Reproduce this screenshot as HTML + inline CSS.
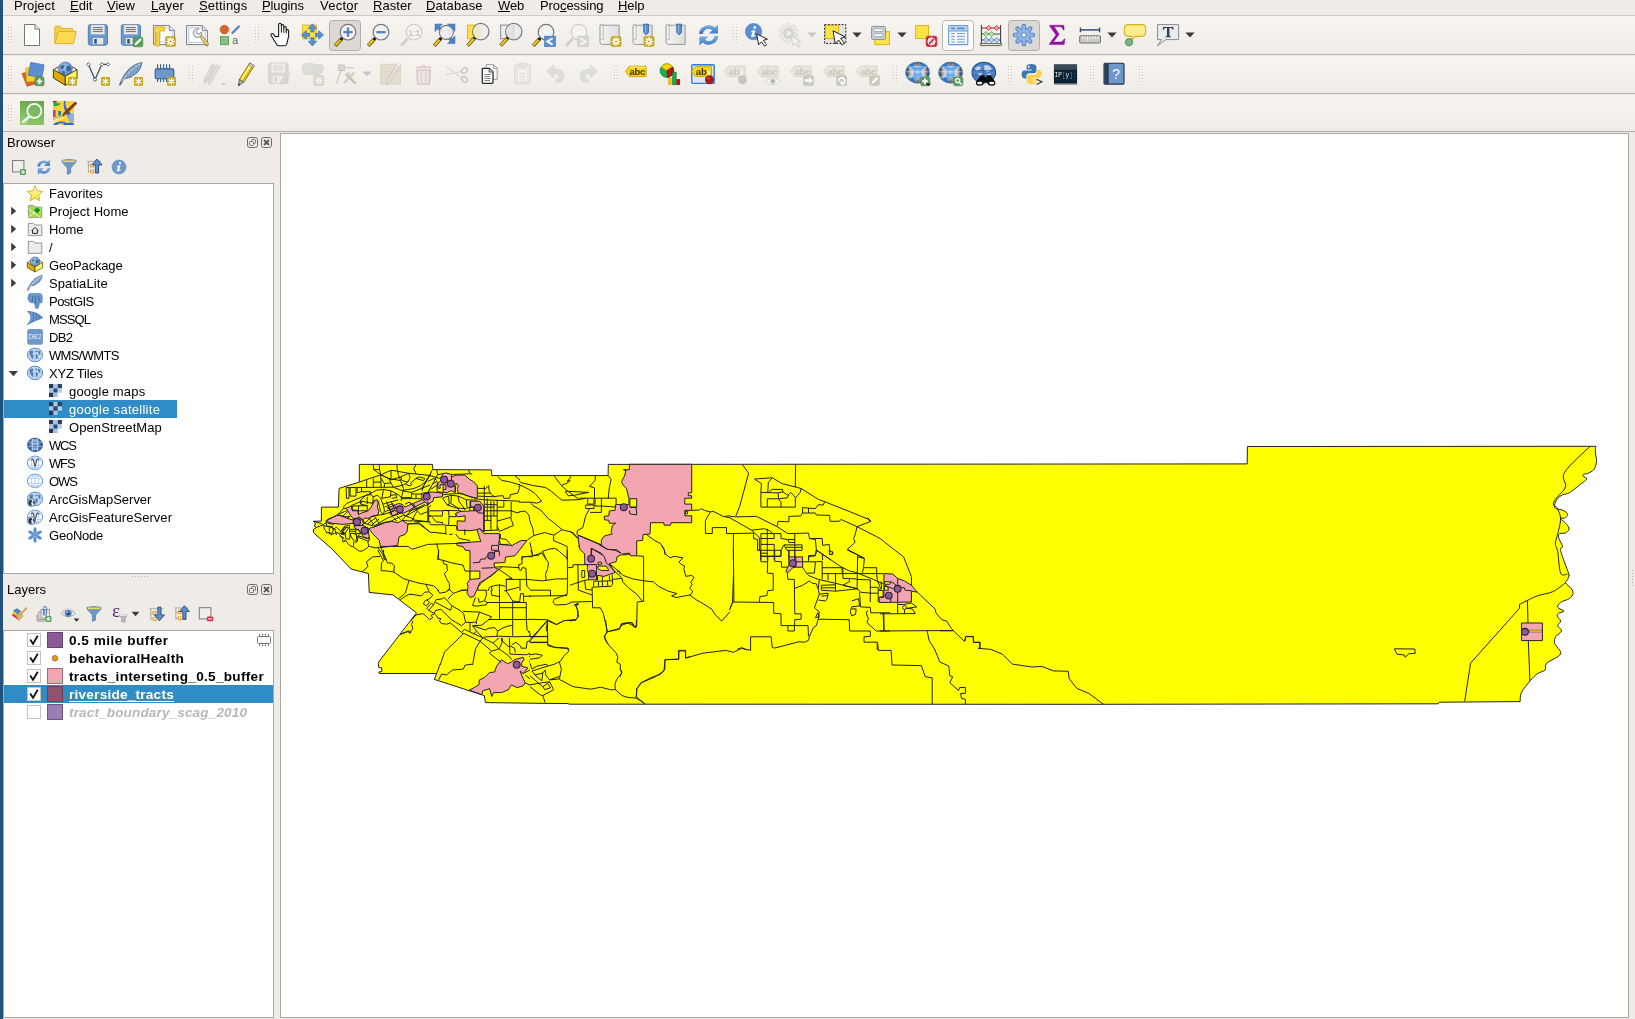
<!DOCTYPE html>
<html><head><meta charset="utf-8"><title>QGIS</title>
<style>
html,body{margin:0;padding:0}
body{width:1635px;height:1019px;position:relative;overflow:hidden;background:#efebe7;font-family:"Liberation Sans",sans-serif;font-size:13px}
.t{position:absolute;white-space:nowrap;will-change:transform}
.i{position:absolute;overflow:visible;will-change:transform}
u{text-decoration:underline;text-underline-offset:1px;text-decoration-skip-ink:none}
</style></head><body>
<div style="position:absolute;left:0px;top:0px;width:3px;height:1019px;background:#22517a"></div>
<div style="position:absolute;left:3px;top:0px;width:1632px;height:15px;background:#efebe7"></div>
<span class="t" style="left:13.70px;top:-2.50px;font-size:13px;line-height:16.00px;color:#000;letter-spacing:0.048px;">Pro<u>j</u>ect</span>
<span class="t" style="left:69.50px;top:-2.50px;font-size:13px;line-height:16.00px;color:#000;letter-spacing:-0.000px;"><u>E</u>dit</span>
<span class="t" style="left:107.30px;top:-2.50px;font-size:13px;line-height:16.00px;color:#000;letter-spacing:-0.011px;"><u>V</u>iew</span>
<span class="t" style="left:150.50px;top:-2.50px;font-size:13px;line-height:16.00px;color:#000;letter-spacing:0.076px;"><u>L</u>ayer</span>
<span class="t" style="left:198.60px;top:-2.50px;font-size:13px;line-height:16.00px;color:#000;letter-spacing:0.178px;"><u>S</u>ettings</span>
<span class="t" style="left:262.40px;top:-2.50px;font-size:13px;line-height:16.00px;color:#000;letter-spacing:-0.120px;"><u>P</u>lugins</span>
<span class="t" style="left:319.80px;top:-2.50px;font-size:13px;line-height:16.00px;color:#000;letter-spacing:0.257px;">Vect<u>o</u>r</span>
<span class="t" style="left:373.40px;top:-2.50px;font-size:13px;line-height:16.00px;color:#000;letter-spacing:0.035px;"><u>R</u>aster</span>
<span class="t" style="left:426.40px;top:-2.50px;font-size:13px;line-height:16.00px;color:#000;letter-spacing:0.119px;"><u>D</u>atabase</span>
<span class="t" style="left:498.20px;top:-2.50px;font-size:13px;line-height:16.00px;color:#000;letter-spacing:-0.165px;"><u>W</u>eb</span>
<span class="t" style="left:539.80px;top:-2.50px;font-size:13px;line-height:16.00px;color:#000;letter-spacing:-0.091px;">Pro<u>c</u>essing</span>
<span class="t" style="left:618.40px;top:-2.50px;font-size:13px;line-height:16.00px;color:#000;letter-spacing:-0.084px;"><u>H</u>elp</span>
<div style="position:absolute;left:3px;top:15px;width:1632px;height:1px;background:#cfcbc5"></div>
<div style="position:absolute;left:3px;top:16px;width:1632px;height:39px;background:linear-gradient(#f8f5f1,#efebe7)"></div>
<div style="position:absolute;left:3px;top:56px;width:1632px;height:38px;background:linear-gradient(#f8f5f1,#efebe7)"></div>
<div style="position:absolute;left:3px;top:95px;width:1632px;height:37px;background:linear-gradient(#f8f5f1,#efebe7)"></div>
<div style="position:absolute;left:3px;top:54px;width:1632px;height:1px;background:#b8b3ad"></div>
<div style="position:absolute;left:3px;top:93px;width:1632px;height:1px;background:#b8b3ad"></div>
<div style="position:absolute;left:3px;top:131px;width:1632px;height:1px;background:#b3aea8"></div>
<svg class="i" style="left:8px;top:27px" width="5" height="17"><rect x="0" y="0" width="1" height="1" fill="#c6c2bc"/><rect x="1" y="1" width="1" height="1" fill="#fbfaf9"/><rect x="3" y="0" width="1" height="1" fill="#c6c2bc"/><rect x="4" y="1" width="1" height="1" fill="#fbfaf9"/><rect x="0" y="3" width="1" height="1" fill="#c6c2bc"/><rect x="1" y="4" width="1" height="1" fill="#fbfaf9"/><rect x="3" y="3" width="1" height="1" fill="#c6c2bc"/><rect x="4" y="4" width="1" height="1" fill="#fbfaf9"/><rect x="0" y="6" width="1" height="1" fill="#c6c2bc"/><rect x="1" y="7" width="1" height="1" fill="#fbfaf9"/><rect x="3" y="6" width="1" height="1" fill="#c6c2bc"/><rect x="4" y="7" width="1" height="1" fill="#fbfaf9"/><rect x="0" y="9" width="1" height="1" fill="#c6c2bc"/><rect x="1" y="10" width="1" height="1" fill="#fbfaf9"/><rect x="3" y="9" width="1" height="1" fill="#c6c2bc"/><rect x="4" y="10" width="1" height="1" fill="#fbfaf9"/><rect x="0" y="12" width="1" height="1" fill="#c6c2bc"/><rect x="1" y="13" width="1" height="1" fill="#fbfaf9"/><rect x="3" y="12" width="1" height="1" fill="#c6c2bc"/><rect x="4" y="13" width="1" height="1" fill="#fbfaf9"/><rect x="0" y="15" width="1" height="1" fill="#c6c2bc"/><rect x="1" y="16" width="1" height="1" fill="#fbfaf9"/><rect x="3" y="15" width="1" height="1" fill="#c6c2bc"/><rect x="4" y="16" width="1" height="1" fill="#fbfaf9"/></svg>
<svg class="i" style="left:20px;top:23px;" width="24" height="24" viewBox="0 0 24 24"><path d="M4.5 1.5 H15 L19.5 6 V22.5 H4.5 Z" fill="#fff" stroke="#777" stroke-width="1" stroke-linejoin="round"/><path d="M15 1.5 V6 H19.5" fill="#f1f1f1" stroke="#777" stroke-width="1" stroke-linejoin="round"/></svg>
<svg class="i" style="left:53px;top:23px;" width="24" height="24" viewBox="0 0 24 24"><path d="M1.8 20.5 V4.2 Q1.8 3.3 2.7 3.3 H7.6 L9 5.6 H19 Q19.9 5.6 19.9 6.5 V9" fill="#f6cf45" stroke="#d8b234" stroke-width="1" stroke-linejoin="round"/><path d="M1.9 20.6 L4.8 9.2 Q5 8.5 5.8 8.5 H23.2 L20.6 20 Q20.4 20.7 19.6 20.7 Z" fill="#fdd950" stroke="#d8b234" stroke-width="1" stroke-linejoin="round"/></svg>
<svg class="i" style="left:86px;top:23px;" width="24" height="24" viewBox="0 0 24 24"><rect x="2.3" y="1.6" width="19.2" height="20.6" rx="2.2" fill="#6c98cb" stroke="#4f7db5" stroke-width="1"/><rect x="5" y="2" width="13.6" height="9.2" fill="#ececec" stroke="#b8c4d2" stroke-width=".6"/><path d="M6.8 4.6 H16.8 M6.8 6.6 H16.8 M6.8 8.6 H16.8" stroke="#6a6a6a" stroke-width="1"/><rect x="6.2" y="14.6" width="11.6" height="7.2" fill="#e4e4e4" stroke="#5c7fa8" stroke-width=".6"/><rect x="8.2" y="16" width="2.6" height="4.6" fill="#2f5687"/></svg>
<svg class="i" style="left:119px;top:23px;" width="24" height="24" viewBox="0 0 24 24"><rect x="2.3" y="1.6" width="19.2" height="20.6" rx="2.2" fill="#6c98cb" stroke="#4f7db5" stroke-width="1"/><rect x="5" y="2" width="13.6" height="9.2" fill="#ececec" stroke="#b8c4d2" stroke-width=".6"/><path d="M6.8 4.6 H16.8 M6.8 6.6 H16.8 M6.8 8.6 H16.8" stroke="#6a6a6a" stroke-width="1"/><rect x="6.2" y="14.6" width="11.6" height="7.2" fill="#e4e4e4" stroke="#5c7fa8" stroke-width=".6"/><rect x="8.2" y="16" width="2.6" height="4.6" fill="#2f5687"/><rect x="14" y="14.2" width="9.8" height="9.6" rx="1.6" fill="#5a9c5a" stroke="#478647" stroke-width=".6"/><path d="M16.6 21.2 L21.4 16.6" stroke="#fff" stroke-width="2.2" stroke-linecap="round"/></svg>
<svg class="i" style="left:152px;top:23px;" width="24" height="24" viewBox="0 0 24 24"><path d="M1.6 2.6 H17.4 L22.4 7.6 V21.6 H1.6 Z" fill="#fff" stroke="#7a7a7a" stroke-width="1" stroke-linejoin="round"/><path d="M17.4 2.6 V7.6 H22.4" fill="#eee" stroke="#7a7a7a" stroke-width="1" stroke-linejoin="round"/><rect x="8" y="5" width="12.4" height="14" fill="none" stroke="#b9c8f0" stroke-width=".9"/><path d="M3 4 H12.6 V8 H7.6 V22.8 H3 Z" fill="#fbd847" stroke="#d8ae1e" stroke-width=".9" stroke-linejoin="round"/><path d="M3.2 10 H5.6 M3.2 12 H5 M3.2 14 H5.6 M3.2 16 H5 M3.2 18 H5.6 M3.2 20 H5" stroke="#c89a14" stroke-width=".7"/>
<rect x="13.2" y="13.2" width="10.6" height="10.6" rx="1.6" fill="#c8a416"/><g stroke="#fff" stroke-width="1.5" stroke-linecap="round"><path d="M18.5 14.8 V22.2 M14.8 18.5 H22.2 M15.9 15.9 L21.1 21.1 M21.1 15.9 L15.9 21.1"/></g><circle cx="18.5" cy="18.5" r="1.1" fill="#c8a416"/></svg>
<svg class="i" style="left:185px;top:23px;" width="24" height="24" viewBox="0 0 24 24"><path d="M1.6 2.6 H17.4 L22.4 7.6 V21.6 H1.6 Z" fill="#fff" stroke="#7a7a7a" stroke-width="1" stroke-linejoin="round"/><path d="M17.4 2.6 V7.6 H22.4" fill="#eee" stroke="#7a7a7a" stroke-width="1" stroke-linejoin="round"/><rect x="3.8" y="4.800" width="16.400" height="14.600" fill="none" stroke="#aebcf0" stroke-width=".9"/>
<path d="M14.600 13.400 L16.400 11.800 L23.600 20.600 L22.800 22.800 L20.800 22.600 Z" fill="#e9cf72" stroke="#8f7c48" stroke-width=".8" stroke-linejoin="round"/><path d="M21.200 21.400 L22.600 22.600" stroke="#6a5a30" stroke-width="1"/><path d="M8.200 10.600 Q7.600 7.600 10.200 6.200 Q12 5.400 13.800 6 L11.400 8.200 L11.800 10.400 L14 11 L16.400 8.800 Q17 10.800 16 12.600 Q14.400 15 11.600 14.600 Q8.800 13.800 8.200 10.600 Z" fill="#e6e6e6" stroke="#7c7c7c" stroke-width=".8" stroke-linejoin="round"/></svg>
<svg class="i" style="left:218px;top:23px;" width="24" height="24" viewBox="0 0 24 24"><circle cx="6.4" cy="6.6" r="4.3" fill="#d5652c" stroke="#c4571f" stroke-width=".6"/><path d="M14.4 10 L20.8 3.4" stroke="#4f7fbd" stroke-width="2.2" stroke-linecap="round"/><rect x="2.5" y="13.6" width="8" height="8" fill="#8fba8f" stroke="#5f9f5f" stroke-width="1"/><text x="14.2" y="20.8" font-family="Liberation Sans" font-size="10.5" fill="#5a5a5a">a</text></svg>
<svg class="i" style="left:254.5px;top:27px" width="5" height="17"><rect x="0" y="0" width="1" height="1" fill="#c6c2bc"/><rect x="1" y="1" width="1" height="1" fill="#fbfaf9"/><rect x="3" y="0" width="1" height="1" fill="#c6c2bc"/><rect x="4" y="1" width="1" height="1" fill="#fbfaf9"/><rect x="0" y="3" width="1" height="1" fill="#c6c2bc"/><rect x="1" y="4" width="1" height="1" fill="#fbfaf9"/><rect x="3" y="3" width="1" height="1" fill="#c6c2bc"/><rect x="4" y="4" width="1" height="1" fill="#fbfaf9"/><rect x="0" y="6" width="1" height="1" fill="#c6c2bc"/><rect x="1" y="7" width="1" height="1" fill="#fbfaf9"/><rect x="3" y="6" width="1" height="1" fill="#c6c2bc"/><rect x="4" y="7" width="1" height="1" fill="#fbfaf9"/><rect x="0" y="9" width="1" height="1" fill="#c6c2bc"/><rect x="1" y="10" width="1" height="1" fill="#fbfaf9"/><rect x="3" y="9" width="1" height="1" fill="#c6c2bc"/><rect x="4" y="10" width="1" height="1" fill="#fbfaf9"/><rect x="0" y="12" width="1" height="1" fill="#c6c2bc"/><rect x="1" y="13" width="1" height="1" fill="#fbfaf9"/><rect x="3" y="12" width="1" height="1" fill="#c6c2bc"/><rect x="4" y="13" width="1" height="1" fill="#fbfaf9"/><rect x="0" y="15" width="1" height="1" fill="#c6c2bc"/><rect x="1" y="16" width="1" height="1" fill="#fbfaf9"/><rect x="3" y="15" width="1" height="1" fill="#c6c2bc"/><rect x="4" y="16" width="1" height="1" fill="#fbfaf9"/></svg>
<div style="position:absolute;left:329px;top:20px;width:32px;height:31px;background:#dcd8d4;border:1px solid #b3aea8;border-radius:3.5px;box-sizing:border-box"></div>
<svg class="i" style="left:267.5px;top:23px;" width="24" height="24" viewBox="0 0 24 24"><path d="M7.2 13.6 L5.4 11.2 Q4.2 10 3.3 10.8 Q2.4 11.6 3.4 13 L8.6 21.2 Q9.6 22.8 11.6 22.8 H16.2 Q18.2 22.8 18.8 20.8 L20.6 13.4 V8 Q20.6 6.6 19.4 6.6 Q18.2 6.6 18.2 8 V5 Q18.2 3.6 17 3.6 Q15.8 3.6 15.8 5 V3 Q15.8 1.6 14.6 1.6 Q13.4 1.6 13.4 3 V2 Q13.4 0.4 12 0.4 Q10.6 0.4 10.6 2 V13.4 Z" fill="#fff" stroke="#1a1a1a" stroke-width="1.1" stroke-linejoin="round"/><path d="M13.4 3 V9.6 M15.8 5 V9.8 M18.2 8 V10.4" stroke="#1a1a1a" stroke-width="1" fill="none"/></svg>
<svg class="i" style="left:300.5px;top:23px;" width="24" height="24" viewBox="0 0 24 24"><rect x="1.6" y="2.1" width="13.6" height="13.6" fill="#fbe348" stroke="#d9b51c" stroke-width="1"/><g fill="#5b8fd0" stroke="#3f73b5" stroke-width=".7" stroke-linejoin="round"><path d="M11.4 0.8 L15.8 5.6 H13 V9 H9.8 V5.6 H7 Z"/><path d="M11.4 23 L15.8 18.2 H13 V14.8 H9.8 V18.2 H7 Z"/><path d="M0.5 11.9 L5.3 7.5 V10.3 H8.6 V13.5 H5.3 V16.3 Z"/><path d="M22.5 11.9 L17.7 7.5 V10.3 H14.4 V13.5 H17.7 V16.3 Z"/></g></svg>
<svg class="i" style="left:333.5px;top:23px;" width="24" height="24" viewBox="0 0 24 24"><path d="M7.6 15.8 L1.2 22.7" stroke="#5a4a10" stroke-width="3.6" stroke-linecap="butt"/><path d="M6.8 16.600 L1.5 22.300" stroke="#f6c51c" stroke-width="2.2"/><circle cx="7.6" cy="15.8" r="1.5" fill="#111"/><circle cx="14" cy="9.2" r="7.8" fill="#f1f1f1" stroke="#777" stroke-width="1.2"/><path d="M14 4.6 V13.8 M9.4 9.2 H18.6" stroke="#4f83c4" stroke-width="2.3"/></svg>
<svg class="i" style="left:366.5px;top:23px;" width="24" height="24" viewBox="0 0 24 24"><path d="M7.6 15.8 L1.2 22.7" stroke="#5a4a10" stroke-width="3.6"/><path d="M6.8 16.600 L1.5 22.300" stroke="#f6c51c" stroke-width="2.2"/><circle cx="7.6" cy="15.8" r="1.5" fill="#111"/><circle cx="14" cy="9.2" r="7.8" fill="#f1f1f1" stroke="#777" stroke-width="1.2"/><path d="M9.4 9.2 H18.6" stroke="#4f83c4" stroke-width="2.3"/></svg>
<svg class="i" style="left:399.5px;top:23px;" width="24" height="24" viewBox="0 0 24 24"><g opacity=".85"><path d="M7.6 15.8 L1.2 22.7" stroke="#cfcabf" stroke-width="3"/><circle cx="14" cy="9.2" r="7.8" fill="#f6f5f3" stroke="#c9c6c1" stroke-width="1.2"/><text x="8.2" y="13" font-family="Liberation Sans" font-weight="bold" font-size="9" fill="#c4c1bc" letter-spacing="-.5">1:1</text></g></svg>
<svg class="i" style="left:432.5px;top:23px;" width="24" height="24" viewBox="0 0 24 24"><g fill="#4f83c4" stroke="#3d6fb0" stroke-width=".5"><path d="M2 1 H9.6 L7 3.6 L10.4 7 L8 9.4 L4.6 6 L2 8.6 Z"/><path d="M22 1 H14.4 L17 3.6 L13.6 7 L16 9.4 L19.4 6 L22 8.6 Z"/><path d="M22 20.6 H14.4 L17 18 L13.6 14.6 L16 12.2 L19.4 15.6 L22 13 Z"/></g><path d="M7.6 15.8 L1.2 22.7" stroke="#5a4a10" stroke-width="3.6"/><path d="M6.8 16.600 L1.5 22.300" stroke="#f6c51c" stroke-width="2.2"/><circle cx="7.6" cy="15.8" r="1.5" fill="#111"/><circle cx="13.4" cy="9.4" r="7" fill="#eeeeee" fill-opacity=".92" stroke="#777" stroke-width="1.1"/></svg>
<svg class="i" style="left:465.5px;top:23px;" width="24" height="24" viewBox="0 0 24 24"><rect x="1.6" y="2.1" width="9" height="13.6" fill="#fbe348" stroke="#d9b51c" stroke-width="1"/><path d="M8.8 14.8 L1.6 22.6" stroke="#5a4a10" stroke-width="3.6"/><path d="M8 15.6 L1.9 22.2" stroke="#f6c51c" stroke-width="2.2"/><circle cx="8.8" cy="14.7" r="1.5" fill="#111"/><circle cx="14.8" cy="8.6" r="8.2" fill="#ececec" stroke="#777" stroke-width="1.2"/><path d="M14.8 1 A7.6 7.6 0 0 0 14.8 16.2 Z" fill="#efe9c8"/></svg>
<svg class="i" style="left:498.5px;top:23px;" width="24" height="24" viewBox="0 0 24 24"><rect x="1.6" y="2.1" width="9" height="13.6" fill="#ececec" stroke="#8c8c8c" stroke-width="1"/><path d="M8.8 14.8 L1.6 22.6" stroke="#5a4a10" stroke-width="3.6"/><path d="M8 15.6 L1.9 22.2" stroke="#f6c51c" stroke-width="2.2"/><circle cx="8.8" cy="14.7" r="1.5" fill="#111"/><circle cx="14.8" cy="8.6" r="8.2" fill="#ececec" stroke="#777" stroke-width="1.2"/><path d="M14.8 1 A7.6 7.6 0 0 0 14.8 16.2 Z" fill="#e2e4e4"/><path d="M14.8 2 V15.4" stroke="#c5c5c5" stroke-width=".7"/></svg>
<svg class="i" style="left:531.5px;top:23px;" width="24" height="24" viewBox="0 0 24 24"><path d="M7.6 15.8 L1.2 22.7" stroke="#5a4a10" stroke-width="3.6"/><path d="M6.8 16.600 L1.5 22.300" stroke="#f6c51c" stroke-width="2.2"/><circle cx="7.6" cy="15.8" r="1.5" fill="#111"/><circle cx="14" cy="9.2" r="7.8" fill="#f1f1f1" stroke="#777" stroke-width="1.2"/><rect x="12.6" y="13.2" width="10.8" height="10.4" fill="#5b8fd0" stroke="#4478b8" stroke-width=".7"/><path d="M20.6 15.2 L15.2 18.4 L20.6 21.6" fill="none" stroke="#fff" stroke-width="1.9"/></svg>
<svg class="i" style="left:564.5px;top:23px;" width="24" height="24" viewBox="0 0 24 24"><g opacity=".85"><path d="M7.6 15.8 L1.2 22.7" stroke="#cfcabf" stroke-width="3"/><circle cx="14" cy="9.2" r="7.8" fill="#f6f5f3" stroke="#c9c6c1" stroke-width="1.2"/><rect x="12.6" y="13.2" width="10.8" height="10.4" fill="#d2d2d2" stroke="#c4c4c4" stroke-width=".7"/><path d="M15.4 15.2 L20.8 18.4 L15.4 21.6" fill="none" stroke="#f2f2f2" stroke-width="1.9"/></g></svg>
<svg class="i" style="left:597.5px;top:23px;" width="24" height="24" viewBox="0 0 24 24"><defs><linearGradient id="sg" x1="0" x2="1"><stop offset="0" stop-color="#f4f4f4"/><stop offset="1" stop-color="#dddddd"/></linearGradient></defs><path d="M2 3 Q2 1.4 3.6 1.4 Q5.2 1.4 5.2 3 V2.2 H21.2 V21.4 H4.4 Q2 21.4 2 19 Z" fill="url(#sg)" stroke="#9a9a9a" stroke-width="1" stroke-linejoin="round"/><path d="M5.2 3 V16.6 H2.2" fill="none" stroke="#b4b4b4" stroke-width=".9"/><rect x="12.6" y="13.2" width="10.8" height="10.6" rx="1.7" fill="#c8a416"/><g stroke="#fff" stroke-width="1.5" stroke-linecap="round"><path d="M18 14.8 V22.2 M14.3 18.5 H21.7 M15.4 15.9 L20.6 21.1 M20.6 15.9 L15.4 21.1"/></g><circle cx="18" cy="18.5" r="1.1" fill="#c8a416"/></svg>
<svg class="i" style="left:630.5px;top:23px;" width="24" height="24" viewBox="0 0 24 24"><defs><linearGradient id="sg" x1="0" x2="1"><stop offset="0" stop-color="#f4f4f4"/><stop offset="1" stop-color="#dddddd"/></linearGradient></defs><path d="M2 3 Q2 1.4 3.6 1.4 Q5.2 1.4 5.2 3 V2.2 H21.2 V21.4 H4.4 Q2 21.4 2 19 Z" fill="url(#sg)" stroke="#9a9a9a" stroke-width="1" stroke-linejoin="round"/><path d="M5.2 3 V16.6 H2.2" fill="none" stroke="#b4b4b4" stroke-width=".9"/><path d="M12.8 1.2 H17.4 V9.4 L15.1 11.8 L12.8 9.4 Z" fill="#5b8fd0" stroke="#2f5f9a" stroke-width=".9" stroke-linejoin="round"/><path d="M14.4 2 V9.6" stroke="#9dbde6" stroke-width=".9"/><rect x="12.6" y="13.2" width="10.8" height="10.6" rx="1.7" fill="#c8a416"/><g stroke="#fff" stroke-width="1.5" stroke-linecap="round"><path d="M18 14.8 V22.2 M14.3 18.5 H21.7 M15.4 15.9 L20.6 21.1 M20.6 15.9 L15.4 21.1"/></g><circle cx="18" cy="18.5" r="1.1" fill="#c8a416"/></svg>
<svg class="i" style="left:663.5px;top:23px;" width="24" height="24" viewBox="0 0 24 24"><defs><linearGradient id="sg" x1="0" x2="1"><stop offset="0" stop-color="#f4f4f4"/><stop offset="1" stop-color="#dddddd"/></linearGradient></defs><path d="M2 3 Q2 1.4 3.6 1.4 Q5.2 1.4 5.2 3 V2.2 H21.2 V21.4 H4.4 Q2 21.4 2 19 Z" fill="url(#sg)" stroke="#9a9a9a" stroke-width="1" stroke-linejoin="round"/><path d="M5.2 3 V16.6 H2.2" fill="none" stroke="#b4b4b4" stroke-width=".9"/><path d="M12.8 1.2 H17.4 V9.4 L15.1 11.8 L12.8 9.4 Z" fill="#5b8fd0" stroke="#2f5f9a" stroke-width=".9" stroke-linejoin="round"/><path d="M14.4 2 V9.6" stroke="#9dbde6" stroke-width=".9"/></svg>
<svg class="i" style="left:696.5px;top:23px;" width="24" height="24" viewBox="0 0 24 24"><defs><linearGradient id="rg" x1="0" y1="0" x2="0" y2="1"><stop offset="0" stop-color="#7fb0e6"/><stop offset="1" stop-color="#3f78c0"/></linearGradient></defs><path d="M2 11 Q2.6 3.2 11.2 2.2 Q15.4 2 17.8 4.4 L21 1.4 V10.4 H12 L15.2 7.2 Q13.2 5.6 10.6 6 Q6.6 6.8 6 11 Z" fill="url(#rg)"/><path d="M21.4 13 Q20.8 20.8 12.2 21.8 Q8 22 5.6 19.6 L2.4 22.6 V13.6 H11.4 L8.2 16.8 Q10.2 18.4 12.8 18 Q16.8 17.2 17.4 13 Z" fill="url(#rg)"/></svg>
<svg class="i" style="left:733px;top:27px" width="5" height="17"><rect x="0" y="0" width="1" height="1" fill="#c6c2bc"/><rect x="1" y="1" width="1" height="1" fill="#fbfaf9"/><rect x="3" y="0" width="1" height="1" fill="#c6c2bc"/><rect x="4" y="1" width="1" height="1" fill="#fbfaf9"/><rect x="0" y="3" width="1" height="1" fill="#c6c2bc"/><rect x="1" y="4" width="1" height="1" fill="#fbfaf9"/><rect x="3" y="3" width="1" height="1" fill="#c6c2bc"/><rect x="4" y="4" width="1" height="1" fill="#fbfaf9"/><rect x="0" y="6" width="1" height="1" fill="#c6c2bc"/><rect x="1" y="7" width="1" height="1" fill="#fbfaf9"/><rect x="3" y="6" width="1" height="1" fill="#c6c2bc"/><rect x="4" y="7" width="1" height="1" fill="#fbfaf9"/><rect x="0" y="9" width="1" height="1" fill="#c6c2bc"/><rect x="1" y="10" width="1" height="1" fill="#fbfaf9"/><rect x="3" y="9" width="1" height="1" fill="#c6c2bc"/><rect x="4" y="10" width="1" height="1" fill="#fbfaf9"/><rect x="0" y="12" width="1" height="1" fill="#c6c2bc"/><rect x="1" y="13" width="1" height="1" fill="#fbfaf9"/><rect x="3" y="12" width="1" height="1" fill="#c6c2bc"/><rect x="4" y="13" width="1" height="1" fill="#fbfaf9"/><rect x="0" y="15" width="1" height="1" fill="#c6c2bc"/><rect x="1" y="16" width="1" height="1" fill="#fbfaf9"/><rect x="3" y="15" width="1" height="1" fill="#c6c2bc"/><rect x="4" y="16" width="1" height="1" fill="#fbfaf9"/></svg>
<svg class="i" style="left:745px;top:23px;" width="24" height="24" viewBox="0 0 24 24"><circle cx="8.6" cy="8.6" r="8.2" fill="#5b8fd0" stroke="#4a7dc0" stroke-width=".6"/><circle cx="9.8" cy="4.4" r="1.3" fill="#fff"/><path d="M6.6 8 L10 7.4 L8.6 12.6 L10.2 12.4 L10 13.2 L6.4 13.8 L7.8 8.6 L6.4 8.8 Z" fill="#fff" stroke="#fff" stroke-width=".5"/><path d="M11.6 10.8 L22.4 16.2 L18.2 17.4 L21.6 21.6 L19.6 23.2 L16.4 18.8 L13.6 21.8 Z" fill="#fff" stroke="#222" stroke-width="1" stroke-linejoin="round"/></svg>
<svg class="i" style="left:778px;top:23px;" width="24" height="24" viewBox="0 0 24 24"><g opacity=".9"><path d="M10.70 5.20 L10.70 1.90 M7.76 6.15 L5.82 3.49 M5.94 8.65 L2.81 7.64 M5.94 11.75 L2.81 12.76 M7.76 14.25 L5.82 16.91 M10.70 15.20 L10.70 18.50 M13.64 14.25 L15.58 16.91 M15.46 11.75 L18.59 12.76 M15.46 8.65 L18.59 7.64 M13.64 6.15 L15.58 3.49 " stroke="#d2cfca" stroke-width="3.6" stroke-linecap="round" fill="none"/><circle cx="10.7" cy="10.2" r="7.6" fill="#d2cfca"/><path d="M10.70 5.20 L10.70 1.90 M7.76 6.15 L5.82 3.49 M5.94 8.65 L2.81 7.64 M5.94 11.75 L2.81 12.76 M7.76 14.25 L5.82 16.91 M10.70 15.20 L10.70 18.50 M13.64 14.25 L15.58 16.91 M15.46 11.75 L18.59 12.76 M15.46 8.65 L18.59 7.64 M13.64 6.15 L15.58 3.49 " stroke="#f0eeeb" stroke-width="2.2" stroke-linecap="round" fill="none"/><circle cx="10.7" cy="10.2" r="6.9" fill="#f0eeeb"/><circle cx="10.7" cy="10.2" r="5.4" fill="#d4d3d1" stroke="#c6c4c0" stroke-width=".7"/><path d="M8.800 7.400 L13.800 10.200 L8.800 13 Z" fill="#f3f2f0"/><path d="M13 13 L22.800 18 L19 19 L22 23 L20.400 24 L17.400 20 L15 22.600 Z" fill="#f5f4f2" stroke="#c9c6c1" stroke-width=".9" stroke-linejoin="round"/></g></svg>
<svg class="i" style="left:806.5px;top:32.4px" width="10" height="6"><path d="M0.4 0.4 H9.600 L5 5.400 Z" fill="#c9c6c1"/></svg>
<svg class="i" style="left:823px;top:23px;" width="24" height="24" viewBox="0 0 24 24"><rect x="1.6" y="1.6" width="21.2" height="18.8" fill="#e3e3e3" stroke="#222" stroke-width="1" stroke-dasharray="2 1.4"/><rect x="2.4" y="2.4" width="13.2" height="13.2" fill="#fbe348" stroke="#d9b51c" stroke-width="1"/><path d="M10 7.8 L22.4 14 L17.6 15.4 L21.4 20.2 L19.2 22 L15.6 17 L12.2 20.6 Z" fill="#fff" stroke="#222" stroke-width="1" stroke-linejoin="round"/></svg>
<svg class="i" style="left:851.5px;top:32.4px" width="10" height="6"><path d="M0.4 0.4 H9.600 L5 5.400 Z" fill="#3a3a3a"/></svg>
<svg class="i" style="left:868px;top:23px;" width="24" height="24" viewBox="0 0 24 24"><rect x="6.8" y="8.6" width="14.6" height="13" fill="#fbe348" stroke="#d9b51c" stroke-width="1"/><rect x="3.6" y="3.4" width="13.8" height="13" rx="1" fill="#c9d3dc" stroke="#8a8f94" stroke-width="1"/><rect x="6" y="5.8" width="9" height="2.8" rx=".6" fill="#fff" stroke="#8a8f94" stroke-width=".7"/><rect x="6" y="10.8" width="9" height="2.8" rx=".6" fill="#fff" stroke="#8a8f94" stroke-width=".7"/></svg>
<svg class="i" style="left:896.5px;top:32.4px" width="10" height="6"><path d="M0.4 0.4 H9.600 L5 5.400 Z" fill="#3a3a3a"/></svg>
<svg class="i" style="left:913px;top:23px;" width="24" height="24" viewBox="0 0 24 24"><rect x="2.6" y="2.6" width="13" height="13" fill="#fbe348" stroke="#d9b51c" stroke-width="1"/><rect x="13.2" y="13.2" width="10.6" height="10.4" rx="1.8" fill="#d9232e" stroke="#c0141f" stroke-width=".6"/><circle cx="18.5" cy="18.4" r="3.6" fill="#f7d9db" stroke="#fff" stroke-width="1"/><path d="M16 20.9 L21 15.9" stroke="#d9232e" stroke-width="1.6"/></svg>
<div style="position:absolute;left:942px;top:20px;width:32px;height:31px;background:#fcfbfa;border:1px solid #b9b5af;border-radius:3.5px;box-sizing:border-box"></div>
<svg class="i" style="left:946px;top:23px;" width="24" height="24" viewBox="0 0 24 24"><rect x="2.6" y="2.6" width="19.2" height="19" rx=".8" fill="#f4f8fd" stroke="#6a9bd4" stroke-width="1.1"/><rect x="3.2" y="3.2" width="18" height="4.6" fill="#b9d2ee"/><path d="M2.6 8 H21.8" stroke="#6a9bd4" stroke-width="1"/><path d="M5.2 5.4 H8.8 M11 5.4 H18.8" stroke="#5b8fd0" stroke-width="1.6"/><path d="M5.2 10.6 H8.8 M11 10.6 H18.8 M5.2 13.4 H8.8 M11 13.4 H18.8 M5.2 16.2 H8.8 M11 16.2 H18.8 M5.2 19 H8.8 M11 19 H18.8" stroke="#6a9bd4" stroke-width="1"/></svg>
<svg class="i" style="left:979px;top:23px;" width="24" height="24" viewBox="0 0 24 24"><path d="M2.4 2 V21 M21.6 2 V21" stroke="#333" stroke-width="1"/><rect x="1.2" y="20.4" width="21.6" height="2.2" rx=".8" fill="#ddd" stroke="#444" stroke-width=".8"/><path d="M2.4 5 H21.6 M2.4 11 H21.6 M2.4 17 H21.6" stroke="#333" stroke-width=".9"/><g stroke-width=".8"><path d="M9.6 2.4 L12.2 5 L9.6 7.6 L7 5 Z M17.6 2.4 L20.2 5 L17.6 7.6 L15 5 Z" fill="#f3a0a0" stroke="#d02c2c"/><path d="M7 8.4 L9.6 11 L7 13.6 L4.4 11 Z M12.6 8.4 L15.2 11 L12.6 13.6 L10 11 Z" fill="#b8e0b0" stroke="#4aa44a"/><path d="M7 14.4 L9.6 17 L7 19.6 L4.4 17 Z M12.4 14.4 L15 17 L12.4 19.6 L9.8 17 Z M17.8 14.4 L20.4 17 L17.8 19.6 L15.2 17 Z" fill="#b9d6f2" stroke="#4a86c8"/></g></svg>
<div style="position:absolute;left:1008px;top:20px;width:32px;height:31px;background:#dcd8d4;border:1px solid #b3aea8;border-radius:3.5px;box-sizing:border-box"></div>
<svg class="i" style="left:1012px;top:23px;" width="24" height="24" viewBox="0 0 24 24"><path d="M11.90 7.50 L11.90 3.10 M8.72 8.82 L5.61 5.71 M7.40 12.00 L3.00 12.00 M8.72 15.18 L5.61 18.29 M11.90 16.50 L11.90 20.90 M15.08 15.18 L18.19 18.29 M16.40 12.00 L20.80 12.00 M15.08 8.82 L18.19 5.71 " stroke="#4c7fc4" stroke-width="4.6" stroke-linecap="round" fill="none"/><circle cx="11.9" cy="12.0" r="7" fill="#4c7fc4"/><path d="M11.90 7.50 L11.90 3.10 M8.72 8.82 L5.61 5.71 M7.40 12.00 L3.00 12.00 M8.72 15.18 L5.61 18.29 M11.90 16.50 L11.90 20.90 M15.08 15.18 L18.19 18.29 M16.40 12.00 L20.80 12.00 M15.08 8.82 L18.19 5.71 " stroke="#8fb3e3" stroke-width="2.8" stroke-linecap="round" fill="none"/><circle cx="11.9" cy="12.0" r="6.1" fill="#8fb3e3"/><circle cx="11.9" cy="12.0" r="2.4" fill="#eef3fa" stroke="#4c7fc4" stroke-width="1"/></svg>
<svg class="i" style="left:1045px;top:23px;" width="24" height="24" viewBox="0 0 24 24"><path d="M4.6 2.2 H18.8 L19.2 7 H18.2 Q17.6 4 15 3.8 H9.2 L14.2 11.2 L8.4 19 H15.8 Q18.4 18.8 19 16 H20 L19.2 21.6 H4.4 V20.8 L11 12 L4.6 3 Z" fill="#930fa5" stroke="#7d0a8e" stroke-width=".4"/></svg>
<svg class="i" style="left:1078px;top:23px;" width="24" height="24" viewBox="0 0 24 24"><path d="M2.4 6.900 H21.6" stroke="#2d4d78" stroke-width="1.5"/><path d="M2.400 4.600 V9.200 M21.600 4.600 V9.200" stroke="#2d4d78" stroke-width="1.3"/><rect x="1.700" y="12.800" width="20.800" height="7.200" rx="1" fill="#c9c9c9" stroke="#6e6e6e" stroke-width="1"/><path d="M4.400 13.200 V16 M7 13.200 V16 M9.600 13.200 V17.600 M12.200 13.200 V16 M14.800 13.200 V16 M17.400 13.200 V16 M20 13.200 V16" stroke="#f6f6f6" stroke-width="1"/></svg>
<svg class="i" style="left:1106.5px;top:32.4px" width="10" height="6"><path d="M0.4 0.4 H9.600 L5 5.400 Z" fill="#3a3a3a"/></svg>
<svg class="i" style="left:1123px;top:23px;" width="24" height="24" viewBox="0 0 24 24"><path d="M5.4 1.600 H18.600 Q22.600 1.600 22.600 5.400 V9.600 Q22.600 13.400 18.600 13.400 H12.400 L7.400 19.200 L9.200 13.400 H5.400 Q1.400 13.400 1.400 9.600 V5.400 Q1.400 1.600 5.400 1.600 Z" fill="#fbec8e" stroke="#d9b019" stroke-width="1.100" stroke-linejoin="round"/><circle cx="6" cy="19.200" r="3.600" fill="#7fb37f" stroke="#4d8a4d" stroke-width="1"/></svg>
<svg class="i" style="left:1156px;top:23px;" width="24" height="24" viewBox="0 0 24 24"><path d="M1.600 1.600 H22.600 V16.600 H10 L1.400 22.800 L5.600 16.600 H1.600 Z" fill="#e6eef3" stroke="#8a8a8a" stroke-width="1" stroke-linejoin="round"/><path d="M7 4 H17.400 V6.800 H16.600 Q16.400 5 14.800 5 H13.400 V12.600 Q13.400 13.400 15 13.500 V14.200 H9.400 V13.500 Q11 13.400 11 12.600 V5 H9.600 Q8 5 7.800 6.800 H7 Z" fill="#3c3c3c"/></svg>
<svg class="i" style="left:1184.5px;top:32.4px" width="10" height="6"><path d="M0.4 0.4 H9.600 L5 5.400 Z" fill="#3a3a3a"/></svg>
<svg class="i" style="left:8px;top:66px" width="5" height="17"><rect x="0" y="0" width="1" height="1" fill="#c6c2bc"/><rect x="1" y="1" width="1" height="1" fill="#fbfaf9"/><rect x="3" y="0" width="1" height="1" fill="#c6c2bc"/><rect x="4" y="1" width="1" height="1" fill="#fbfaf9"/><rect x="0" y="3" width="1" height="1" fill="#c6c2bc"/><rect x="1" y="4" width="1" height="1" fill="#fbfaf9"/><rect x="3" y="3" width="1" height="1" fill="#c6c2bc"/><rect x="4" y="4" width="1" height="1" fill="#fbfaf9"/><rect x="0" y="6" width="1" height="1" fill="#c6c2bc"/><rect x="1" y="7" width="1" height="1" fill="#fbfaf9"/><rect x="3" y="6" width="1" height="1" fill="#c6c2bc"/><rect x="4" y="7" width="1" height="1" fill="#fbfaf9"/><rect x="0" y="9" width="1" height="1" fill="#c6c2bc"/><rect x="1" y="10" width="1" height="1" fill="#fbfaf9"/><rect x="3" y="9" width="1" height="1" fill="#c6c2bc"/><rect x="4" y="10" width="1" height="1" fill="#fbfaf9"/><rect x="0" y="12" width="1" height="1" fill="#c6c2bc"/><rect x="1" y="13" width="1" height="1" fill="#fbfaf9"/><rect x="3" y="12" width="1" height="1" fill="#c6c2bc"/><rect x="4" y="13" width="1" height="1" fill="#fbfaf9"/><rect x="0" y="15" width="1" height="1" fill="#c6c2bc"/><rect x="1" y="16" width="1" height="1" fill="#fbfaf9"/><rect x="3" y="15" width="1" height="1" fill="#c6c2bc"/><rect x="4" y="16" width="1" height="1" fill="#fbfaf9"/></svg>
<svg class="i" style="left:20px;top:62px;" width="24" height="24" viewBox="0 0 24 24"><path d="M1.900 11.600 L14.900 7.900 L18.500 20.900 L7.100 24.300 Z" fill="#d5652c" stroke="#b9511d" stroke-width=".7" stroke-linejoin="round"/><path d="M5.700 6 L19.300 4.800 L20.700 18.600 L6.900 20 Z" fill="#f7cf2b" stroke="#d4aa12" stroke-width=".7" stroke-linejoin="round"/><path d="M10.800 0.400 L24 2.900 L21.900 15.500 L8.200 13.300 Z" fill="#5b8fd0" stroke="#3f73b5" stroke-width=".8" stroke-linejoin="round"/><rect x="15" y="15" width="9" height="8.800" rx="1.600" fill="#5a9c5a" stroke="#468746" stroke-width=".6"/><path d="M19.500 16.600 V22.200 M16.700 19.400 H22.300" stroke="#fff" stroke-width="1.900"/></svg>
<svg class="i" style="left:53px;top:62px;" width="24" height="24" viewBox="0 0 24 24"><defs><radialGradient id="gl" cx="40%" cy="35%" r="70%"><stop offset="0" stop-color="#a9c7ec"/><stop offset="1" stop-color="#4f7fc0"/></radialGradient></defs><circle cx="12.300" cy="7" r="7" fill="url(#gl)" stroke="#3b659e" stroke-width=".6"/><path d="M8 3.600 Q10 2.400 11.600 3.600 L11 6 L8.600 7.400 L7.200 5.800 Z M13.200 4.600 L16.400 3.800 L18 6.600 L16 9.600 L13.400 8.400 Z M9 9 L11.600 9.400 L11.800 12.400 L9.600 12 Z" fill="#2f5588" opacity=".85"/><path d="M0.400 7.600 L12.300 14.300 V23.300 L0.400 16 Z" fill="#d9ac00" stroke="#3a3000" stroke-width=".9" stroke-linejoin="round"/><path d="M24 7.600 L12.300 14.300 V23.300 L24 16.800 Z" fill="#fff569" stroke="#3a3000" stroke-width=".9" stroke-linejoin="round"/><path d="M0.400 7.600 L5.600 4.800 M24 7.600 L19 4.800" stroke="#3a3000" stroke-width=".9"/><rect x="15" y="15" width="9" height="8.800" rx="1.400" fill="#c8a416"/><g stroke="#fff" stroke-width="1.300" stroke-linecap="round"><path d="M19.500 16.400 V22.400 M16.900 17.900 L22.100 20.900 M22.100 17.900 L16.900 20.900"/></g></svg>
<svg class="i" style="left:86px;top:62px;" width="24" height="24" viewBox="0 0 24 24"><path d="M2.400 2.400 L9 17.400 L15.800 2.400 H22" fill="none" stroke="#2d4a66" stroke-width="1.200" stroke-linejoin="round"/><g fill="#fff" stroke="#2d4a66" stroke-width=".8"><path d="M2.400 0.600 L4.200 2.400 L2.400 4.200 L0.600 2.400 Z M15.800 0.600 L17.600 2.400 L15.800 4.200 L14 2.400 Z M22 0.600 L23.800 2.400 L22 4.200 L20.200 2.400 Z"/><circle cx="9" cy="17.600" r="1.500"/></g><rect x="15" y="15" width="9" height="8.800" rx="1.400" fill="#c8a416"/><g stroke="#fff" stroke-width="1.300" stroke-linecap="round"><path d="M19.500 16.400 V22.400 M16.900 17.900 L22.100 20.900 M22.100 17.900 L16.900 20.900"/></g></svg>
<svg class="i" style="left:119px;top:62px;" width="24" height="24" viewBox="0 0 24 24"><path d="M22.800 0.400 Q22.600 6 18.400 10.400 Q12.400 16 5.400 16.800 L1 23.400 L0.500 22.800 Q2.400 17.600 5.600 12.400 Q10 5.600 16.400 2.600 Q19.600 1.200 22.800 0.400 Z" fill="#86a6cd" stroke="#3b5577" stroke-width=".8" stroke-linejoin="round"/><path d="M21.600 1.600 Q12 6.400 3.200 19.600" fill="none" stroke="#d7e4f3" stroke-width=".9"/><path d="M19 3.400 L18 8 M15.600 5.200 L14.400 10.800 M12.200 8 L10.800 13.600 M9 11.600 L7.600 15.600" stroke="#5f7fa8" stroke-width=".6"/><rect x="15" y="15" width="9" height="8.800" rx="1.400" fill="#c8a416"/><g stroke="#fff" stroke-width="1.300" stroke-linecap="round"><path d="M19.500 16.400 V22.400 M16.900 17.900 L22.100 20.900 M22.100 17.900 L16.900 20.900"/></g></svg>
<svg class="i" style="left:152px;top:62px;" width="24" height="24" viewBox="0 0 24 24"><path d="M5.600 2.200 V7 M8.600 2.200 V7 M11.600 2.200 V7 M14.600 2.200 V7 M17.600 2.200 V7 M5.600 16.600 V20 M8.600 16.600 V20 M11.600 16.600 V20 M14.600 16.600 V20" stroke="#2f5e93" stroke-width="1.100"/><rect x="3.200" y="6.900" width="18.600" height="9.800" rx="1.200" fill="#6c98cb" stroke="#2f5e93" stroke-width="1.100"/><rect x="15" y="15" width="9" height="8.800" rx="1.400" fill="#c8a416"/><g stroke="#fff" stroke-width="1.300" stroke-linecap="round"><path d="M19.500 16.400 V22.400 M16.900 17.900 L22.100 20.900 M22.100 17.900 L16.900 20.900"/></g></svg>
<svg class="i" style="left:189px;top:66px" width="5" height="17"><rect x="0" y="0" width="1" height="1" fill="#c6c2bc"/><rect x="1" y="1" width="1" height="1" fill="#fbfaf9"/><rect x="3" y="0" width="1" height="1" fill="#c6c2bc"/><rect x="4" y="1" width="1" height="1" fill="#fbfaf9"/><rect x="0" y="3" width="1" height="1" fill="#c6c2bc"/><rect x="1" y="4" width="1" height="1" fill="#fbfaf9"/><rect x="3" y="3" width="1" height="1" fill="#c6c2bc"/><rect x="4" y="4" width="1" height="1" fill="#fbfaf9"/><rect x="0" y="6" width="1" height="1" fill="#c6c2bc"/><rect x="1" y="7" width="1" height="1" fill="#fbfaf9"/><rect x="3" y="6" width="1" height="1" fill="#c6c2bc"/><rect x="4" y="7" width="1" height="1" fill="#fbfaf9"/><rect x="0" y="9" width="1" height="1" fill="#c6c2bc"/><rect x="1" y="10" width="1" height="1" fill="#fbfaf9"/><rect x="3" y="9" width="1" height="1" fill="#c6c2bc"/><rect x="4" y="10" width="1" height="1" fill="#fbfaf9"/><rect x="0" y="12" width="1" height="1" fill="#c6c2bc"/><rect x="1" y="13" width="1" height="1" fill="#fbfaf9"/><rect x="3" y="12" width="1" height="1" fill="#c6c2bc"/><rect x="4" y="13" width="1" height="1" fill="#fbfaf9"/><rect x="0" y="15" width="1" height="1" fill="#c6c2bc"/><rect x="1" y="16" width="1" height="1" fill="#fbfaf9"/><rect x="3" y="15" width="1" height="1" fill="#c6c2bc"/><rect x="4" y="16" width="1" height="1" fill="#fbfaf9"/></svg>
<svg class="i" style="left:201.5px;top:62px;" width="24" height="24" viewBox="0 0 24 24"><g opacity=".85"><path d="M10.400 1 L13.800 3 L5.400 19.400 L2 22 L2.200 17.600 Z" fill="#d9d4cd" stroke="#cfc9c1" stroke-width=".7"/><path d="M15.400 1.400 L18.800 3.400 L9.600 20.400 L6.200 22.800 L6.400 18.600 Z" fill="#ddd6d0" stroke="#cfc9c1" stroke-width=".7"/><path d="M10.400 1 L13.800 3 M15.400 1.400 L18.800 3.400" stroke="#f4f2ef" stroke-width="2"/></g><path d="M19.400 21 H24.200 L21.800 23.600 Z" fill="#ccc8c2"/></svg>
<svg class="i" style="left:234.5px;top:62px;" width="24" height="24" viewBox="0 0 24 24"><path d="M14.700 1 L19.300 3.700 L8.700 20.300 L4.300 17.500 Z" fill="#f2d21f" stroke="#7a6a10" stroke-width=".9" stroke-linejoin="round"/><path d="M15.600 3.200 L6.800 17.400" stroke="#fff7b0" stroke-width="1.300"/><path d="M17.400 4 L8 18.800" stroke="#c4a60e" stroke-width="1"/><path d="M14.700 1 L19.300 3.700 L18.300 5.400 L13.700 2.600 Z" fill="#e6e6e6" stroke="#777" stroke-width=".8" stroke-linejoin="round"/><path d="M4.300 17.500 L8.700 20.300 L3.400 23.800 Z" fill="#b4b4b4" stroke="#555" stroke-width=".8" stroke-linejoin="round"/><path d="M3.800 21.400 L5.400 22.400 L3.400 23.800 Z" fill="#222"/></svg>
<svg class="i" style="left:267.5px;top:62px;" width="24" height="24" viewBox="0 0 24 24"><g opacity=".8" transform="translate(-1.5 -.6)"><rect x="2.300" y="1.600" width="19.200" height="20.600" rx="2.200" fill="#d4d2cf" stroke="#c6c3bf" stroke-width="1"/><rect x="5" y="2" width="13.600" height="9.200" fill="#efeeec"/><path d="M6.800 4.600 H16.800 M6.800 6.600 H16.800 M6.800 8.600 H16.800" stroke="#d0cdc9" stroke-width="1"/><rect x="6.200" y="14.600" width="11.600" height="7.200" fill="#ecebe9"/><rect x="8.200" y="16" width="2.600" height="4.600" fill="#d0cdc9"/><path d="M20.400 9 L23.600 11 L17.400 21.200 L14.400 23.400 L14.600 19.600 Z" fill="#ddd0c8" stroke="#cfc5bd" stroke-width=".7"/></g></svg>
<svg class="i" style="left:300.5px;top:62px;" width="24" height="24" viewBox="0 0 24 24"><g opacity=".6"><path d="M1 7.400 Q0.400 2 6 1.300 Q10 0.800 14 2.300 Q17.600 3.400 20 2.300 Q22.800 3.200 22.200 7.600 Q21.800 11.600 18.400 12.800 Q14 12 11 12.400 Q6 13.600 2.800 11.400 Q1.200 9.800 1 7.400 Z" fill="#ccd0cb" stroke="#bcbfba" stroke-width=".8"/><rect x="12.400" y="13.200" width="10.800" height="10.600" rx="1.700" fill="#c3bdac"/><g stroke="#f1efe9" stroke-width="1.500" stroke-linecap="round"><path d="M17.800 14.800 V22.200 M14.100 18.500 H21.500 M15.200 15.900 L20.400 21.100 M20.400 15.900 L15.200 21.100"/></g></g></svg>
<svg class="i" style="left:333.5px;top:62px;" width="24" height="24" viewBox="0 0 24 24"><g opacity=".7" transform="translate(0 2)"><rect x="4.800" y="1" width="5.400" height="5.400" fill="#f1f0ee" stroke="#9a9792" stroke-width=".9"/><circle cx="7.500" cy="3.700" r="1.400" fill="none" stroke="#9a9792" stroke-width=".8"/><path d="M10.400 3.700 H20.400" stroke="#c9c6c1" stroke-width="1.400"/><path d="M7.200 6.600 L2.400 19.600" stroke="#9a9792" stroke-width=".8"/><path d="M10 18.800 L20.400 8.400" stroke="#c9c3b4" stroke-width="2.400"/><path d="M10.400 10.400 L14.400 7.400 L16.400 9.600 L12.600 12.800 Z" fill="#cfccc7"/><path d="M12.800 10.800 L21.600 19.600" stroke="#b9b19d" stroke-width="2.600"/></g></svg>
<svg class="i" style="left:361.5px;top:71.4px" width="10" height="6"><path d="M0.4 0.4 H9.600 L5 5.400 Z" fill="#c9c6c1"/></svg>
<svg class="i" style="left:378.5px;top:62px;" width="24" height="24" viewBox="0 0 24 24"><g opacity=".75"><rect x="1.600" y="2.200" width="19.800" height="5.800" fill="#ddd8c4" stroke="#cbc5ae" stroke-width=".8"/><rect x="1.600" y="9.500" width="19.800" height="5.200" fill="#ddd8c4" stroke="#cbc5ae" stroke-width=".8"/><rect x="1.600" y="16.200" width="19.800" height="5.800" fill="#ddd8c4" stroke="#cbc5ae" stroke-width=".8"/><path d="M18.400 1 L21.600 3 L10.400 20.400 L7.600 22.800 L7.800 18.800 Z" fill="#e6d9d6" stroke="#b8aeaa" stroke-width=".8" stroke-linejoin="round"/><path d="M18.400 1 L21.600 3 L20.600 4.600 L17.400 2.600 Z" fill="#f4f2f0"/></g></svg>
<svg class="i" style="left:411.5px;top:62px;" width="24" height="24" viewBox="0 0 24 24"><g opacity=".6" fill="none" stroke="#c9aab0" stroke-width="1.600"><path d="M3.600 5.400 H19.400"/><path d="M9.400 4.600 Q11.500 1.400 13.600 4.600" stroke-width="1.200"/><path d="M4.800 8.200 L5.800 22 H17.200 L18.200 8.200 Z" fill="#ebdfe1"/><path d="M9.200 10 V20 M13.800 10 V20" stroke="#d9c3c7" stroke-width="2"/></g></svg>
<svg class="i" style="left:444.5px;top:62px;" width="24" height="24" viewBox="0 0 24 24"><g opacity=".6"><path d="M1.200 4.200 L16.400 15.800" stroke="#d9d6d2" stroke-width="1.800"/><path d="M0.800 12.600 L15.400 9.800" stroke="#d2cfcb" stroke-width="1.800"/><ellipse cx="19.400" cy="8.400" rx="3.200" ry="2.300" transform="rotate(-35 19.400 8.400)" fill="none" stroke="#c7a6ab" stroke-width="1.500"/><ellipse cx="19.600" cy="17.400" rx="3.200" ry="2.300" transform="rotate(40 19.600 17.400)" fill="none" stroke="#c7a6ab" stroke-width="1.500"/></g></svg>
<svg class="i" style="left:477.5px;top:62px;" width="24" height="24" viewBox="0 0 24 24"><path d="M8.200 2.600 H15.600 L19.200 6.200 V17.400 H8.200 Z" fill="#f6f6f6" stroke="#9a9a9a" stroke-width="1" stroke-linejoin="round"/><path d="M15.600 2.600 V6.200 H19.200" fill="none" stroke="#9a9a9a" stroke-width=".9"/><path d="M4.300 7 Q4.300 6.300 5 6.300 H11.200 L15 10 V20.600 Q15 21.300 14.300 21.300 H5 Q4.300 21.300 4.300 20.600 Z" fill="#fff" stroke="#2e2e2e" stroke-width="1.300" stroke-linejoin="round"/><path d="M11.200 6.400 V10 H14.900" fill="#eee" stroke="#2e2e2e" stroke-width=".9"/><path d="M6.400 12.500 H12.800 M6.400 14.500 H12 M6.400 16.500 H12.800 M6.400 18.500 H12" stroke="#666" stroke-width=".8"/></svg>
<svg class="i" style="left:510.5px;top:62px;" width="24" height="24" viewBox="0 0 24 24"><g opacity=".55"><rect x="3.800" y="2.600" width="15.400" height="19.200" rx="1" fill="#e9e4df" stroke="#c9c1b9" stroke-width="1"/><rect x="7.400" y="1.200" width="8.200" height="3.800" rx=".8" fill="#d9d6d2" stroke="#c4c0bb" stroke-width=".7"/><path d="M6.200 6.600 H13.600 L16.800 9.800 V19.600 H6.200 Z" fill="#f6f5f3" stroke="#cfcbc5" stroke-width=".8"/><path d="M8 11.400 H15 M8 13.400 H13 M8 15.400 H15 M8 17.400 H14" stroke="#d3cfc9" stroke-width=".9"/></g></svg>
<svg class="i" style="left:543.5px;top:62px;" width="24" height="24" viewBox="0 0 24 24"><path d="M2.600 9.400 L9.600 2.900 V6.800 Q15 6.400 18.400 9.600 Q21.200 13 19.600 17 Q18 20.400 13.600 20.900 L11.600 20.400 L12 17.600 Q15.600 16.800 15.400 14 Q14.800 11.600 9.600 12 V16 Z" fill="#ded5d1" stroke="#d5cbc6" stroke-width=".6" opacity=".8"/></svg>
<svg class="i" style="left:576.5px;top:62px;" width="24" height="24" viewBox="0 0 24 24"><path d="M20.600 9.400 L13.600 2.900 V6.800 Q8.200 6.400 4.800 9.600 Q2 13 3.600 17 Q5.200 20.400 9.600 20.900 L11.600 20.400 L11.200 17.600 Q7.600 16.800 7.800 14 Q8.400 11.600 13.600 12 V16 Z" fill="#d5d9d3" stroke="#cbd0c9" stroke-width=".6" opacity=".8"/></svg>
<svg class="i" style="left:613.5px;top:66px" width="5" height="17"><rect x="0" y="0" width="1" height="1" fill="#c6c2bc"/><rect x="1" y="1" width="1" height="1" fill="#fbfaf9"/><rect x="3" y="0" width="1" height="1" fill="#c6c2bc"/><rect x="4" y="1" width="1" height="1" fill="#fbfaf9"/><rect x="0" y="3" width="1" height="1" fill="#c6c2bc"/><rect x="1" y="4" width="1" height="1" fill="#fbfaf9"/><rect x="3" y="3" width="1" height="1" fill="#c6c2bc"/><rect x="4" y="4" width="1" height="1" fill="#fbfaf9"/><rect x="0" y="6" width="1" height="1" fill="#c6c2bc"/><rect x="1" y="7" width="1" height="1" fill="#fbfaf9"/><rect x="3" y="6" width="1" height="1" fill="#c6c2bc"/><rect x="4" y="7" width="1" height="1" fill="#fbfaf9"/><rect x="0" y="9" width="1" height="1" fill="#c6c2bc"/><rect x="1" y="10" width="1" height="1" fill="#fbfaf9"/><rect x="3" y="9" width="1" height="1" fill="#c6c2bc"/><rect x="4" y="10" width="1" height="1" fill="#fbfaf9"/><rect x="0" y="12" width="1" height="1" fill="#c6c2bc"/><rect x="1" y="13" width="1" height="1" fill="#fbfaf9"/><rect x="3" y="12" width="1" height="1" fill="#c6c2bc"/><rect x="4" y="13" width="1" height="1" fill="#fbfaf9"/><rect x="0" y="15" width="1" height="1" fill="#c6c2bc"/><rect x="1" y="16" width="1" height="1" fill="#fbfaf9"/><rect x="3" y="15" width="1" height="1" fill="#c6c2bc"/><rect x="4" y="16" width="1" height="1" fill="#fbfaf9"/></svg>
<svg class="i" style="left:625px;top:62px;" width="24" height="24" viewBox="0 0 24 24"><path d="M0.400 9.400 L4.600 4.200 H21 V14.600 H4.600 Z" fill="#f7d515" stroke="#c8a600" stroke-width="1" stroke-linejoin="round"/><path d="M4.800 5.200 H20" stroke="#fdf08a" stroke-width="1"/><text x="4.400" y="12.800" font-family="Liberation Sans" font-weight="bold" font-size="9.500" fill="#3a3200" letter-spacing="-.2">abc</text></svg>
<svg class="i" style="left:658px;top:62px;" width="24" height="24" viewBox="0 0 24 24"><circle cx="8.900" cy="8.600" r="6.800" fill="#18b24b" stroke="#0d7a30" stroke-width=".7"/><path d="M8.900 8.600 L3.200 5 A6.800 6.800 0 0 1 14.600 5 Z" fill="#fbd500" stroke="#c9a600" stroke-width=".5"/><path d="M8.900 8.600 L14.600 5 A6.800 6.800 0 0 1 9.400 15.400 Z" fill="#b8140f" stroke="#7a0a07" stroke-width=".5"/><rect x="10.600" y="16.400" width="2.600" height="6.300" fill="#fbc400" stroke="#d09a00" stroke-width=".5"/><rect x="14.700" y="10.300" width="3.400" height="12.400" fill="#18b24b" stroke="#0d7a30" stroke-width=".8"/><rect x="18.900" y="17.600" width="2.900" height="5.100" fill="#b8140f" stroke="#7a0a07" stroke-width=".6"/></svg>
<svg class="i" style="left:691px;top:62px;" width="24" height="24" viewBox="0 0 24 24"><rect x="0.800" y="2.800" width="22.400" height="18.600" rx="1" fill="#dfe8f2" stroke="#2a7fe0" stroke-width="1.400"/><path d="M0.600 9.400 L4.600 4.200 H20.600 V14.600 H4.600 Z" fill="#f7d515" stroke="#c8a600" stroke-width="1" stroke-linejoin="round"/><text x="4.800" y="12.800" font-family="Liberation Sans" font-weight="bold" font-size="9.500" fill="#3a3200" letter-spacing="-.2">ab</text><path d="M17.400 9 L18.300 15.400" stroke="#eee" stroke-width="1.700" stroke-linecap="round"/><circle cx="18.500" cy="17.700" r="4.500" fill="#9c1c22"/><circle cx="17.400" cy="16.400" r="1.400" fill="#c9545a" opacity=".7"/></svg>
<svg class="i" style="left:724px;top:62px;" width="24" height="24" viewBox="0 0 24 24"><g opacity=".95"><path d="M0.400 9.400 L4.600 4.200 H21 V14.600 H4.600 Z" fill="#e9e5d9" stroke="#d6d1c3" stroke-width="1" stroke-linejoin="round"/><text x="4.800" y="12.800" font-family="Liberation Sans" font-weight="bold" font-size="9.500" fill="#c6c3bc" letter-spacing="-.2">ab</text><path d="M17.400 9 L18.300 15.400" stroke="#f4f4f4" stroke-width="1.700" stroke-linecap="round"/><circle cx="18.500" cy="17.700" r="4.500" fill="#c9bfc0"/></g></svg>
<svg class="i" style="left:757px;top:62px;" width="24" height="24" viewBox="0 0 24 24"><g opacity=".95"><path d="M0.400 9.400 L4.600 4.200 H21 V14.600 H4.600 Z" fill="#e9e5d9" stroke="#d6d1c3" stroke-width="1" stroke-linejoin="round"/><text x="4.400" y="12.800" font-family="Liberation Sans" font-weight="bold" font-size="9.500" fill="#c6c3bc" letter-spacing="-.2">abc</text><path d="M8.400 19.400 Q15.800 12.800 23.400 19.400 Q15.800 26 8.400 19.400 Z" fill="#f7f6f4" stroke="#cfccc7" stroke-width=".8"/><circle cx="15.800" cy="19.200" r="2.600" fill="#c2c7d2"/><circle cx="15.800" cy="19.200" r="1.100" fill="#9a9da6"/><path d="M9.600 16.400 Q15.800 12.400 22 16" fill="none" stroke="#d9d6d1" stroke-width=".7"/></g></svg>
<svg class="i" style="left:790px;top:62px;" width="24" height="24" viewBox="0 0 24 24"><g opacity=".95"><path d="M0.400 9.400 L4.600 4.200 H21 V14.600 H4.600 Z" fill="#e9e5d9" stroke="#d6d1c3" stroke-width="1" stroke-linejoin="round"/><text x="4.400" y="12.800" font-family="Liberation Sans" font-weight="bold" font-size="9.500" fill="#c6c3bc" letter-spacing="-.2">abc</text><rect x="13.200" y="13.200" width="10.700" height="10.500" rx="1.700" fill="#c4c4c4"/><path d="M14.800 17.200 H19 V15 L23 18.500 L19 22 V19.800 H14.800 Z" fill="#fff"/></g></svg>
<svg class="i" style="left:823px;top:62px;" width="24" height="24" viewBox="0 0 24 24"><g opacity=".95"><path d="M0.400 9.400 L4.600 4.200 H21 V14.600 H4.600 Z" fill="#e9e5d9" stroke="#d6d1c3" stroke-width="1" stroke-linejoin="round"/><text x="4.400" y="12.800" font-family="Liberation Sans" font-weight="bold" font-size="9.500" fill="#c6c3bc" letter-spacing="-.2">abc</text><rect x="13.200" y="13.200" width="10.700" height="10.500" rx="1.700" fill="#c4c4c4"/><path d="M15.600 19.400 A3.100 3.100 0 1 1 18.600 22" fill="none" stroke="#fff" stroke-width="1.700"/><path d="M16.800 19.400 L19.800 19.600 L18.400 22.600 Z" fill="#fff"/></g></svg>
<svg class="i" style="left:856px;top:62px;" width="24" height="24" viewBox="0 0 24 24"><g opacity=".95"><path d="M0.400 9.400 L4.600 4.200 H21 V14.600 H4.600 Z" fill="#e9e5d9" stroke="#d6d1c3" stroke-width="1" stroke-linejoin="round"/><text x="4.400" y="12.800" font-family="Liberation Sans" font-weight="bold" font-size="9.500" fill="#c6c3bc" letter-spacing="-.2">abc</text><rect x="13.200" y="13.200" width="10.700" height="10.500" rx="1.700" fill="#cbc6b6"/><path d="M15.400 21.800 L16.200 19.400 L20.600 15 L22.200 16.600 L17.800 21 Z" fill="#fff"/></g></svg>
<svg class="i" style="left:893px;top:66px" width="5" height="17"><rect x="0" y="0" width="1" height="1" fill="#c6c2bc"/><rect x="1" y="1" width="1" height="1" fill="#fbfaf9"/><rect x="3" y="0" width="1" height="1" fill="#c6c2bc"/><rect x="4" y="1" width="1" height="1" fill="#fbfaf9"/><rect x="0" y="3" width="1" height="1" fill="#c6c2bc"/><rect x="1" y="4" width="1" height="1" fill="#fbfaf9"/><rect x="3" y="3" width="1" height="1" fill="#c6c2bc"/><rect x="4" y="4" width="1" height="1" fill="#fbfaf9"/><rect x="0" y="6" width="1" height="1" fill="#c6c2bc"/><rect x="1" y="7" width="1" height="1" fill="#fbfaf9"/><rect x="3" y="6" width="1" height="1" fill="#c6c2bc"/><rect x="4" y="7" width="1" height="1" fill="#fbfaf9"/><rect x="0" y="9" width="1" height="1" fill="#c6c2bc"/><rect x="1" y="10" width="1" height="1" fill="#fbfaf9"/><rect x="3" y="9" width="1" height="1" fill="#c6c2bc"/><rect x="4" y="10" width="1" height="1" fill="#fbfaf9"/><rect x="0" y="12" width="1" height="1" fill="#c6c2bc"/><rect x="1" y="13" width="1" height="1" fill="#fbfaf9"/><rect x="3" y="12" width="1" height="1" fill="#c6c2bc"/><rect x="4" y="13" width="1" height="1" fill="#fbfaf9"/><rect x="0" y="15" width="1" height="1" fill="#c6c2bc"/><rect x="1" y="16" width="1" height="1" fill="#fbfaf9"/><rect x="3" y="15" width="1" height="1" fill="#c6c2bc"/><rect x="4" y="16" width="1" height="1" fill="#fbfaf9"/></svg>
<svg class="i" style="left:905.5px;top:62px;" width="24" height="24" viewBox="0 0 24 24"><defs><radialGradient id="gg" cx="50%" cy="48%" r="55%"><stop offset="0" stop-color="#a8cdf6"/><stop offset=".5" stop-color="#3a8de4"/><stop offset="1" stop-color="#1e66c0"/></radialGradient><linearGradient id="gcl" x1="0" x2="1"><stop offset="0" stop-color="#2e2e2e"/><stop offset=".55" stop-color="#bdbdbd"/><stop offset="1" stop-color="#e4e4e4"/></linearGradient><linearGradient id="gcr" x1="1" x2="0"><stop offset="0" stop-color="#2e2e2e"/><stop offset=".55" stop-color="#bdbdbd"/><stop offset="1" stop-color="#e4e4e4"/></linearGradient><linearGradient id="gct" x1="0" x2="0" y1="0" y2="1"><stop offset="0" stop-color="#3a3a3a"/><stop offset="1" stop-color="#cfcfcf"/></linearGradient><linearGradient id="gcb" x1="0" x2="0" y1="1" y2="0"><stop offset="0" stop-color="#3a3a3a"/><stop offset="1" stop-color="#cfcfcf"/></linearGradient></defs><ellipse cx="11.600" cy="10.600" rx="12" ry="10.500" fill="url(#gg)" stroke="#3d82d6" stroke-width=".8"/><path d="M2.400 4 Q7.800 6 7.600 10.600 Q7.800 15.200 2.400 17.200 Q-1.200 10.600 2.400 4 Z" fill="url(#gcl)"/><path d="M20.800 4 Q15.400 6 15.600 10.600 Q15.400 15.200 20.800 17.200 Q24.400 10.600 20.800 4 Z" fill="url(#gcr)"/><path d="M8.200 0.700 Q11.600 -.7 15 0.700 Q14.600 5.400 11.600 5.600 Q8.600 5.400 8.200 0.700 Z" fill="url(#gct)"/><path d="M8.200 20.500 Q11.600 21.900 15 20.500 Q14.600 15.800 11.600 15.600 Q8.600 15.800 8.200 20.500 Z" fill="url(#gcb)"/><path d="M-.2 9.800 H23.400 M0.800 14.800 H22.400 M2.400 5 H20.800" stroke="#d4e6fa" stroke-width=".7" fill="none" opacity=".9"/><ellipse cx="11.600" cy="10.600" rx="4.200" ry="10.300" fill="none" stroke="#c4dcf8" stroke-width=".5" opacity=".7"/><rect x="14.800" y="15" width="9" height="8.800" rx="1.600" fill="#5a9c5a" stroke="#468746" stroke-width=".6"/><path d="M19 16.400 V22.200 M16.200 19.300 H21.800" stroke="#fff" stroke-width="2"/><path d="M19.400 21.400 H25 L22.200 24 Z" fill="#1a1a1a"/></svg>
<svg class="i" style="left:938.5px;top:62px;" width="24" height="24" viewBox="0 0 24 24"><defs><radialGradient id="gg" cx="50%" cy="48%" r="55%"><stop offset="0" stop-color="#a8cdf6"/><stop offset=".5" stop-color="#3a8de4"/><stop offset="1" stop-color="#1e66c0"/></radialGradient><linearGradient id="gcl" x1="0" x2="1"><stop offset="0" stop-color="#2e2e2e"/><stop offset=".55" stop-color="#bdbdbd"/><stop offset="1" stop-color="#e4e4e4"/></linearGradient><linearGradient id="gcr" x1="1" x2="0"><stop offset="0" stop-color="#2e2e2e"/><stop offset=".55" stop-color="#bdbdbd"/><stop offset="1" stop-color="#e4e4e4"/></linearGradient><linearGradient id="gct" x1="0" x2="0" y1="0" y2="1"><stop offset="0" stop-color="#3a3a3a"/><stop offset="1" stop-color="#cfcfcf"/></linearGradient><linearGradient id="gcb" x1="0" x2="0" y1="1" y2="0"><stop offset="0" stop-color="#3a3a3a"/><stop offset="1" stop-color="#cfcfcf"/></linearGradient></defs><ellipse cx="11.600" cy="10.600" rx="12" ry="10.500" fill="url(#gg)" stroke="#3d82d6" stroke-width=".8"/><path d="M2.400 4 Q7.800 6 7.600 10.600 Q7.800 15.200 2.400 17.200 Q-1.200 10.600 2.400 4 Z" fill="url(#gcl)"/><path d="M20.800 4 Q15.400 6 15.600 10.600 Q15.400 15.200 20.800 17.200 Q24.400 10.600 20.800 4 Z" fill="url(#gcr)"/><path d="M8.200 0.700 Q11.600 -.7 15 0.700 Q14.600 5.400 11.600 5.600 Q8.600 5.400 8.200 0.700 Z" fill="url(#gct)"/><path d="M8.200 20.500 Q11.600 21.900 15 20.500 Q14.600 15.800 11.600 15.600 Q8.600 15.800 8.200 20.500 Z" fill="url(#gcb)"/><path d="M-.2 9.800 H23.400 M0.800 14.800 H22.400 M2.400 5 H20.800" stroke="#d4e6fa" stroke-width=".7" fill="none" opacity=".9"/><ellipse cx="11.600" cy="10.600" rx="4.200" ry="10.300" fill="none" stroke="#c4dcf8" stroke-width=".5" opacity=".7"/><rect x="14.800" y="15" width="9" height="8.800" rx="1.600" fill="#5a9c5a" stroke="#468746" stroke-width=".6"/><circle cx="18.600" cy="18.600" r="2.100" fill="none" stroke="#fff" stroke-width="1.300"/><path d="M20.200 20.200 L22.600 22.600" stroke="#fff" stroke-width="1.500"/></svg>
<svg class="i" style="left:971.5px;top:62px;" width="24" height="24" viewBox="0 0 24 24"><ellipse cx="11.800" cy="10.600" rx="11.800" ry="10.400" fill="#4f82c6" stroke="#1f4f95" stroke-width="1.100"/><path d="M3 6 Q7 3 9 5 L8 8 L4 9 Z M11 3 L17 3.600 L20 7 L16 10 L12 8 Z M6 11 L10 11.600 L10 15 L7 14 Z M14 12 L19 11.600 L18 14.600 Z" fill="#d3e2f5" opacity=".85"/><path d="M0.400 8.600 H23.200 M1.600 13.400 H22 M11.800 0.400 V20" stroke="#23508f" stroke-width=".6"/><path d="M8.400 13.600 L11.800 13.200 L13.600 15.400 L15.400 13.200 L18.800 13.600 L23 19.400 Q24.600 23.400 20 23.700 Q15.600 23.700 15.200 20.400 H12 Q11.600 23.700 7.400 23.700 Q2.800 23.400 4.200 19.400 Z" fill="#0a0a0a"/><ellipse cx="7.700" cy="21.100" rx="2.700" ry="1.400" fill="#f4f4f4"/><ellipse cx="19.700" cy="21.100" rx="2.700" ry="1.400" fill="#f4f4f4"/></svg>
<svg class="i" style="left:1008px;top:66px" width="5" height="17"><rect x="0" y="0" width="1" height="1" fill="#c6c2bc"/><rect x="1" y="1" width="1" height="1" fill="#fbfaf9"/><rect x="3" y="0" width="1" height="1" fill="#c6c2bc"/><rect x="4" y="1" width="1" height="1" fill="#fbfaf9"/><rect x="0" y="3" width="1" height="1" fill="#c6c2bc"/><rect x="1" y="4" width="1" height="1" fill="#fbfaf9"/><rect x="3" y="3" width="1" height="1" fill="#c6c2bc"/><rect x="4" y="4" width="1" height="1" fill="#fbfaf9"/><rect x="0" y="6" width="1" height="1" fill="#c6c2bc"/><rect x="1" y="7" width="1" height="1" fill="#fbfaf9"/><rect x="3" y="6" width="1" height="1" fill="#c6c2bc"/><rect x="4" y="7" width="1" height="1" fill="#fbfaf9"/><rect x="0" y="9" width="1" height="1" fill="#c6c2bc"/><rect x="1" y="10" width="1" height="1" fill="#fbfaf9"/><rect x="3" y="9" width="1" height="1" fill="#c6c2bc"/><rect x="4" y="10" width="1" height="1" fill="#fbfaf9"/><rect x="0" y="12" width="1" height="1" fill="#c6c2bc"/><rect x="1" y="13" width="1" height="1" fill="#fbfaf9"/><rect x="3" y="12" width="1" height="1" fill="#c6c2bc"/><rect x="4" y="13" width="1" height="1" fill="#fbfaf9"/><rect x="0" y="15" width="1" height="1" fill="#c6c2bc"/><rect x="1" y="16" width="1" height="1" fill="#fbfaf9"/><rect x="3" y="15" width="1" height="1" fill="#c6c2bc"/><rect x="4" y="16" width="1" height="1" fill="#fbfaf9"/></svg>
<svg class="i" style="left:1019.8px;top:62px;" width="24" height="24" viewBox="0 0 24 24"><path d="M11.200 2.100 Q6.600 2.100 6.600 5 V7.600 H11.600 V8.600 H4.600 Q1.600 8.600 1.600 12.600 Q1.600 16.400 4.600 16.400 H6.400 V13.800 Q6.400 11.200 9.200 11.200 H14 Q16.400 11.200 16.400 8.800 V5 Q16.400 2.100 11.200 2.100 Z" fill="#3a78b0"/><circle cx="8.800" cy="4.700" r=".95" fill="#fff"/><path d="M12 22.200 Q16.600 22.200 16.600 19.300 V16.700 H11.600 V15.700 H18.600 Q21.600 15.700 21.600 11.700 Q21.600 7.900 18.600 7.900 H16.800 V10.500 Q16.800 13.100 14 13.100 H9.200 Q6.800 13.100 6.800 15.500 V19.300 Q6.800 22.200 12 22.200 Z" fill="#ffd141"/><circle cx="14.400" cy="19.600" r=".95" fill="#fff"/><path d="M16.600 17.200 L22 19.800 L16.600 22.600" fill="none" stroke="#333" stroke-width="1.100"/><path d="M11.800 19.400 H15.400 M11.800 17.800 H14.600" stroke="#ffe58a" stroke-width=".8"/></svg>
<svg class="i" style="left:1053.5px;top:62px;" width="24" height="24" viewBox="0 0 24 24"><rect x="-.2" y="2.400" width="23.400" height="20.400" fill="#8f8f8f"/><rect x="0" y="2.600" width="23" height="18.800" fill="#0e2233"/><rect x="0" y="2.600" width="23" height="5.200" fill="#3a4a57"/><text x="0.600" y="14.800" font-family="Liberation Mono" font-size="7.800" fill="#f2f2f2" textLength="21.800" lengthAdjust="spacingAndGlyphs">IP<tspan fill="#2a8fd0">[</tspan>y<tspan fill="#2a8fd0">]:</tspan></text></svg>
<svg class="i" style="left:1090px;top:66px" width="5" height="17"><rect x="0" y="0" width="1" height="1" fill="#c6c2bc"/><rect x="1" y="1" width="1" height="1" fill="#fbfaf9"/><rect x="3" y="0" width="1" height="1" fill="#c6c2bc"/><rect x="4" y="1" width="1" height="1" fill="#fbfaf9"/><rect x="0" y="3" width="1" height="1" fill="#c6c2bc"/><rect x="1" y="4" width="1" height="1" fill="#fbfaf9"/><rect x="3" y="3" width="1" height="1" fill="#c6c2bc"/><rect x="4" y="4" width="1" height="1" fill="#fbfaf9"/><rect x="0" y="6" width="1" height="1" fill="#c6c2bc"/><rect x="1" y="7" width="1" height="1" fill="#fbfaf9"/><rect x="3" y="6" width="1" height="1" fill="#c6c2bc"/><rect x="4" y="7" width="1" height="1" fill="#fbfaf9"/><rect x="0" y="9" width="1" height="1" fill="#c6c2bc"/><rect x="1" y="10" width="1" height="1" fill="#fbfaf9"/><rect x="3" y="9" width="1" height="1" fill="#c6c2bc"/><rect x="4" y="10" width="1" height="1" fill="#fbfaf9"/><rect x="0" y="12" width="1" height="1" fill="#c6c2bc"/><rect x="1" y="13" width="1" height="1" fill="#fbfaf9"/><rect x="3" y="12" width="1" height="1" fill="#c6c2bc"/><rect x="4" y="13" width="1" height="1" fill="#fbfaf9"/><rect x="0" y="15" width="1" height="1" fill="#c6c2bc"/><rect x="1" y="16" width="1" height="1" fill="#fbfaf9"/><rect x="3" y="15" width="1" height="1" fill="#c6c2bc"/><rect x="4" y="16" width="1" height="1" fill="#fbfaf9"/></svg>
<svg class="i" style="left:1102px;top:62px;" width="24" height="24" viewBox="0 0 24 24"><rect x="2" y="1.300" width="20" height="20.800" rx="1" fill="#6c98cb" stroke="#1f2f45" stroke-width="1.100"/><rect x="2.400" y="1.700" width="4.400" height="20" fill="#2c3e55"/><text x="10.200" y="16.800" font-family="Liberation Sans" font-size="14" fill="#fff">?</text></svg>
<svg class="i" style="left:1139px;top:66px" width="5" height="17"><rect x="0" y="0" width="1" height="1" fill="#c6c2bc"/><rect x="1" y="1" width="1" height="1" fill="#fbfaf9"/><rect x="3" y="0" width="1" height="1" fill="#c6c2bc"/><rect x="4" y="1" width="1" height="1" fill="#fbfaf9"/><rect x="0" y="3" width="1" height="1" fill="#c6c2bc"/><rect x="1" y="4" width="1" height="1" fill="#fbfaf9"/><rect x="3" y="3" width="1" height="1" fill="#c6c2bc"/><rect x="4" y="4" width="1" height="1" fill="#fbfaf9"/><rect x="0" y="6" width="1" height="1" fill="#c6c2bc"/><rect x="1" y="7" width="1" height="1" fill="#fbfaf9"/><rect x="3" y="6" width="1" height="1" fill="#c6c2bc"/><rect x="4" y="7" width="1" height="1" fill="#fbfaf9"/><rect x="0" y="9" width="1" height="1" fill="#c6c2bc"/><rect x="1" y="10" width="1" height="1" fill="#fbfaf9"/><rect x="3" y="9" width="1" height="1" fill="#c6c2bc"/><rect x="4" y="10" width="1" height="1" fill="#fbfaf9"/><rect x="0" y="12" width="1" height="1" fill="#c6c2bc"/><rect x="1" y="13" width="1" height="1" fill="#fbfaf9"/><rect x="3" y="12" width="1" height="1" fill="#c6c2bc"/><rect x="4" y="13" width="1" height="1" fill="#fbfaf9"/><rect x="0" y="15" width="1" height="1" fill="#c6c2bc"/><rect x="1" y="16" width="1" height="1" fill="#fbfaf9"/><rect x="3" y="15" width="1" height="1" fill="#c6c2bc"/><rect x="4" y="16" width="1" height="1" fill="#fbfaf9"/></svg>
<svg class="i" style="left:8px;top:105px" width="5" height="17"><rect x="0" y="0" width="1" height="1" fill="#c6c2bc"/><rect x="1" y="1" width="1" height="1" fill="#fbfaf9"/><rect x="3" y="0" width="1" height="1" fill="#c6c2bc"/><rect x="4" y="1" width="1" height="1" fill="#fbfaf9"/><rect x="0" y="3" width="1" height="1" fill="#c6c2bc"/><rect x="1" y="4" width="1" height="1" fill="#fbfaf9"/><rect x="3" y="3" width="1" height="1" fill="#c6c2bc"/><rect x="4" y="4" width="1" height="1" fill="#fbfaf9"/><rect x="0" y="6" width="1" height="1" fill="#c6c2bc"/><rect x="1" y="7" width="1" height="1" fill="#fbfaf9"/><rect x="3" y="6" width="1" height="1" fill="#c6c2bc"/><rect x="4" y="7" width="1" height="1" fill="#fbfaf9"/><rect x="0" y="9" width="1" height="1" fill="#c6c2bc"/><rect x="1" y="10" width="1" height="1" fill="#fbfaf9"/><rect x="3" y="9" width="1" height="1" fill="#c6c2bc"/><rect x="4" y="10" width="1" height="1" fill="#fbfaf9"/><rect x="0" y="12" width="1" height="1" fill="#c6c2bc"/><rect x="1" y="13" width="1" height="1" fill="#fbfaf9"/><rect x="3" y="12" width="1" height="1" fill="#c6c2bc"/><rect x="4" y="13" width="1" height="1" fill="#fbfaf9"/><rect x="0" y="15" width="1" height="1" fill="#c6c2bc"/><rect x="1" y="16" width="1" height="1" fill="#fbfaf9"/><rect x="3" y="15" width="1" height="1" fill="#c6c2bc"/><rect x="4" y="16" width="1" height="1" fill="#fbfaf9"/></svg>
<svg class="i" style="left:20px;top:101px;" width="24" height="24" viewBox="0 0 24 24"><defs><linearGradient id="qg" x1="0" y1="0" x2="0" y2="1"><stop offset="0" stop-color="#69a84e"/><stop offset="1" stop-color="#96d472"/></linearGradient></defs><rect x="0" y="0" width="24" height="24" fill="url(#qg)"/><path d="M24 0 L6 24 H24 Z" fill="#5c9c42" opacity=".22"/><circle cx="14.300" cy="9.900" r="7" fill="#7db863" fill-opacity=".55" stroke="#fff" stroke-width="1.700"/><path d="M9.200 15.600 L3.400 20.800" stroke="#eef3fb" stroke-width="2.600" stroke-linecap="round"/></svg>
<svg class="i" style="left:53px;top:101px;" width="24" height="24" viewBox="0 0 24 24"><rect x="0" y="0" width="21" height="24" fill="#ffd33a"/><path d="M0 0 H3.600 V1.600 H0 Z" fill="#a0185a"/><path d="M0.600 1.600 L8 2.600 L5.600 4.600 L0.600 5.600 Z" fill="#20b030"/><path d="M0 9 H2.600 V16 H0 Z" fill="#b8407a"/><path d="M5.200 10 H8 V14.600 H5.200 Z" fill="#2f7f9a"/><path d="M11 0 H12.600 L12.400 4 Q13 7 15.600 9.400 L18 13 L21 18 V21 H17 L15 16 L12.600 11 Q10.400 7 10.600 3 Z" fill="#2d6ae0"/><path d="M15 14 L21 12 V21 H17 Z" fill="#8fb0f0"/><path d="M0 19 Q4 16.400 9 16 L12 17 Q6 18 2 21.600 L0 23 Z" fill="#f3e7b0"/><path d="M2 22 Q6 20 10 20.600 L14 22 L19 21.600 L21 23 V24 H0 Z" fill="#2d6ae0"/><path d="M5 23 Q8 21.600 11 22.600 L10 24 H4 Z" fill="#ffd33a"/><path d="M0 18.600 L3 16.600 L9.600 15.400" stroke="#2f4a7a" stroke-width=".6" fill="none" stroke-dasharray="1 .7"/><path d="M22.200 0.800 L24 2.600 L12.400 13.800 L10.600 12 Z" fill="#8a3a0c" stroke="#6a2a06" stroke-width=".5"/><path d="M10.600 12 L12.400 13.800 L10.200 15.400 L9 14.200 Z" fill="#555"/></svg>
<span class="t" style="left:6.90px;top:134.50px;font-size:13px;line-height:16.00px;color:#000;letter-spacing:0.074px;">Browser</span>
<svg class="i" style="left:247px;top:137px" width="11" height="11"><rect x="0.5" y="0.5" width="10" height="10" rx="2.2" fill="none" stroke="#6f6b66" stroke-width="1"/><rect x="4.5" y="2.5" width="4" height="4" rx="1" fill="none" stroke="#6f6b66"/><rect x="2.5" y="4.5" width="4" height="4" rx="1" fill="#efebe7" stroke="#6f6b66"/></svg>
<svg class="i" style="left:261px;top:137px" width="11" height="11"><rect x="0.5" y="0.5" width="10" height="10" rx="2.2" fill="none" stroke="#6f6b66" stroke-width="1"/><path d="M3 3 L8 8 M8 3 L3 8" stroke="#5d5a55" stroke-width="1.8"/></svg>
<svg class="i" style="left:11px;top:159px;" width="16" height="16" viewBox="0 0 16 16"><rect x="1.500" y="1.500" width="11.400" height="11.400" fill="#eeeeee" stroke="#7a7a7a" stroke-width="1"/><rect x="9" y="10" width="6" height="6" rx="1.300" fill="#5a9c5a"/><circle cx="12" cy="13" r="1.900" fill="#cfe3cf"/></svg>
<svg class="i" style="left:36px;top:159px;" width="16" height="16" viewBox="0 0 16 16"><defs><linearGradient id="rg2" x1="0" y1="0" x2="0" y2="1"><stop offset="0" stop-color="#86b4e6"/><stop offset="1" stop-color="#3f78c0"/></linearGradient></defs><path d="M1.200 7.400 Q1.600 2.200 7.400 1.400 Q10.200 1.200 11.800 2.800 L14 0.800 V7 H8 L10.200 4.800 Q8.800 3.800 7.200 4 Q4.400 4.600 4 7.400 Z" fill="url(#rg2)"/><path d="M14.600 8.800 Q14.200 14 8.400 14.800 Q5.600 15 4 13.400 L1.800 15.400 V9.200 H7.800 L5.600 11.400 Q7 12.400 8.600 12.200 Q11.400 11.600 11.800 8.800 Z" fill="url(#rg2)"/></svg>
<svg class="i" style="left:61px;top:159px;" width="16" height="16" viewBox="0 0 16 16"><path d="M1 1.300 Q8 -.2 15 1.300 V3 L9.600 9 V14 L6.400 15.400 V9 L1 3 Z" fill="#6c98cb" stroke="#4a78b0" stroke-width=".7" stroke-linejoin="round"/><path d="M1.800 2.300 H14.200" stroke="#f7e436" stroke-width="1.600"/></svg>
<svg class="i" style="left:86px;top:159px;" width="16" height="16" viewBox="0 0 16 16"><path d="M0.900 2.300 H15.100 M2.400 2.300 V13.600 M2.400 6.600 H4.700 M2.400 12.600 H4.700" stroke="#a7a39d" stroke-width=".9" fill="none"/><rect x="4.800" y="5.200" width="2.700" height="2.700" fill="#fff" stroke="#f29a13" stroke-width="1"/><rect x="4.800" y="11.300" width="2.700" height="2.700" fill="#fff" stroke="#f29a13" stroke-width="1"/><path d="M11 0 L16 5.900 H12.600 V14 H9.400 V5.900 H6 Z" fill="#5b8fd0" stroke="#2d4a6e" stroke-width=".9" stroke-linejoin="round"/></svg>
<svg class="i" style="left:111px;top:159px;" width="16" height="16" viewBox="0 0 16 16"><circle cx="8" cy="8" r="7" fill="#6c98cb" stroke="#5584c0" stroke-width=".6"/><circle cx="9" cy="4.200" r="1.100" fill="#fff"/><path d="M6.200 7 L9.200 6.400 L8 11 L9.400 10.800 L9.200 11.600 L6 12.200 L7.200 7.600 L6 7.800 Z" fill="#fff" stroke="#fff" stroke-width=".4"/></svg>
<div style="position:absolute;left:3px;top:183px;width:271px;height:391px;background:#fff;border:1px solid #aca7a0;box-sizing:border-box"></div>
<svg class="i" style="left:27px;top:185px;" width="16" height="16" viewBox="0 0 16 16"><defs><linearGradient id="st" x1="0" y1="0" x2="0" y2="1"><stop offset="0" stop-color="#fffbd0"/><stop offset="1" stop-color="#fbe22c"/></linearGradient></defs><path d="M8 0.600 L10.200 5.800 L15.800 6.400 L11.600 10.200 L12.800 15.800 L8 12.900 L3.200 15.800 L4.400 10.200 L0.200 6.400 L5.800 5.800 Z" fill="url(#st)" stroke="#d4aa1a" stroke-width=".9" stroke-linejoin="round"/></svg>
<span class="t" style="left:49.00px;top:186.20px;font-size:13px;line-height:16.00px;color:#000;letter-spacing:0.038px;">Favorites</span>
<svg class="i" style="left:27px;top:203px;" width="16" height="16" viewBox="0 0 16 16"><path d="M1.300 2.400 H6.400 L7.800 4 H14.800 V14.600 H1.300 Z" fill="#a9d94f" stroke="#8c8c8c" stroke-width=".8" stroke-linejoin="round"/><path d="M1.600 14 L14 4.600 M1.600 6 L13 14.400" stroke="#e6f5c4" stroke-width="1"/><path d="M7.200 6.200 L10.600 4.800 L13.200 6.400 L11.200 9.800 L8.400 9.200 Z" fill="#0f8f1f"/></svg>
<span class="t" style="left:49.00px;top:204.20px;font-size:13px;line-height:16.00px;color:#000;letter-spacing:0.071px;">Project Home</span>
<svg class="i" style="left:10px;top:206px" width="8" height="10"><path d="M1.2 0.8 L6.2 5 L1.2 9.2 Z" fill="#3c3c3c"/></svg>
<svg class="i" style="left:27px;top:221px;" width="16" height="16" viewBox="0 0 16 16"><path d="M1.300 2.400 H6.400 L7.800 4 H14.800 V14.600 H1.300 Z" fill="#ececec" stroke="#8c8c8c" stroke-width=".9" stroke-linejoin="round"/><path d="M4.600 9.800 L8 6.400 L11.400 9.800 M5.600 9.200 V12.400 H10.400 V9.200" fill="none" stroke="#1a1a1a" stroke-width="1"/></svg>
<span class="t" style="left:49.00px;top:222.20px;font-size:13px;line-height:16.00px;color:#000;letter-spacing:-0.045px;">Home</span>
<svg class="i" style="left:10px;top:224px" width="8" height="10"><path d="M1.2 0.8 L6.2 5 L1.2 9.2 Z" fill="#3c3c3c"/></svg>
<svg class="i" style="left:27px;top:239px;" width="16" height="16" viewBox="0 0 16 16"><path d="M1.300 2.400 H6.400 L7.800 4 H14.800 V14.400 H1.300 Z" fill="#ececec" stroke="#8c8c8c" stroke-width=".9" stroke-linejoin="round"/></svg>
<span class="t" style="left:49.00px;top:240.20px;font-size:13px;line-height:16.00px;color:#000;">/</span>
<svg class="i" style="left:10px;top:242px" width="8" height="10"><path d="M1.2 0.8 L6.2 5 L1.2 9.2 Z" fill="#3c3c3c"/></svg>
<svg class="i" style="left:27px;top:257px;" width="16" height="16" viewBox="0 0 16 16"><defs><radialGradient id="gl2" cx="40%" cy="35%" r="70%"><stop offset="0" stop-color="#b5cfef"/><stop offset="1" stop-color="#4f7fc0"/></radialGradient></defs><circle cx="8" cy="4.800" r="4.900" fill="url(#gl2)" stroke="#3b659e" stroke-width=".5"/><path d="M5 2.600 L7 2 L7.400 4 L5.800 5 Z M8.600 3 L11 2.800 L11.800 5 L10 6.400 L8.600 5.400 Z" fill="#2f5588" opacity=".8"/><path d="M0.300 5.400 L8 9.800 V15 L0.300 10.600 Z" fill="#d9ac00" stroke="#4a3c00" stroke-width=".7" stroke-linejoin="round"/><path d="M15.700 5.400 L8 9.800 V15 L15.700 10.600 Z" fill="#fff569" stroke="#4a3c00" stroke-width=".7" stroke-linejoin="round"/><path d="M0.300 5.400 L3.600 3.600 M15.700 5.400 L12.400 3.600" stroke="#4a3c00" stroke-width=".7"/></svg>
<span class="t" style="left:49.00px;top:258.20px;font-size:13px;line-height:16.00px;color:#000;letter-spacing:-0.166px;">GeoPackage</span>
<svg class="i" style="left:10px;top:260px" width="8" height="10"><path d="M1.2 0.8 L6.2 5 L1.2 9.2 Z" fill="#3c3c3c"/></svg>
<svg class="i" style="left:27px;top:275px;" width="16" height="16" viewBox="0 0 16 16"><path d="M15.200 0.200 Q15 4 12.200 7 Q8.200 10.800 3.600 11.200 L0.700 15.600 L0.300 15.200 Q1.600 11.800 3.800 8.200 Q6.800 3.800 11 1.800 Q13 0.800 15.200 0.200 Z" fill="#86a6cd" stroke="#3b5577" stroke-width=".6" stroke-linejoin="round"/><path d="M14.400 1 Q8 4.400 2.200 13" fill="none" stroke="#d7e4f3" stroke-width=".7"/></svg>
<span class="t" style="left:49.00px;top:276.20px;font-size:13px;line-height:16.00px;color:#000;letter-spacing:0.098px;">SpatiaLite</span>
<svg class="i" style="left:10px;top:278px" width="8" height="10"><path d="M1.2 0.8 L6.2 5 L1.2 9.2 Z" fill="#3c3c3c"/></svg>
<svg class="i" style="left:27px;top:293px;" width="16" height="16" viewBox="0 0 16 16"><path d="M2 1 Q5 -.2 8 0.800 Q11 -.2 14.400 1 Q16 3.600 15 7.600 L15.600 8.800 L14 10 Q13 10.400 12.400 9.400 L12 13 Q11.600 16 9 15.600 Q7.600 15 8 12 L7 9.800 Q4 10.400 2 8.400 Q-.4 5 2 1 Z" fill="#6c98cb" stroke="#4d7cb6" stroke-width=".6"/><path d="M5.400 3.400 V8.400 M7.600 3 Q9.400 5 8.200 8.800 L9.600 12 M11.400 3 Q12.600 5.400 12 8.400" fill="none" stroke="#3b679e" stroke-width=".9"/></svg>
<span class="t" style="left:49.00px;top:294.20px;font-size:13px;line-height:16.00px;color:#000;letter-spacing:-0.530px;">PostGIS</span>
<svg class="i" style="left:27px;top:311px;" width="16" height="16" viewBox="0 0 16 16"><path d="M0.400 0.400 Q10 0.400 15.800 6.800 Q8 9.600 0.200 13.600 Q3.400 11.200 4 7 Q4.200 3 0.400 0.400 Z" fill="#6c98cb" stroke="#3f6fa8" stroke-width=".7" stroke-linejoin="round"/><path d="M5.400 1.400 Q7.800 5.600 5.800 10.400 M8.800 2.200 Q10.800 6 9.200 9 M11.600 3.600 Q13 6 12.200 7.800" fill="none" stroke="#3f6fa8" stroke-width=".8"/></svg>
<span class="t" style="left:49.00px;top:312.20px;font-size:13px;line-height:16.00px;color:#000;letter-spacing:-0.883px;">MSSQL</span>
<svg class="i" style="left:27px;top:329px;" width="16" height="16" viewBox="0 0 16 16"><rect x="0.200" y="0.100" width="15.700" height="15.700" rx="2.200" fill="#6c98cb"/><text x="1.200" y="10.400" font-family="Liberation Sans" font-size="6.700" fill="#eef3fa" letter-spacing=".1">DB2</text></svg>
<span class="t" style="left:49.00px;top:330.20px;font-size:13px;line-height:16.00px;color:#000;letter-spacing:-0.663px;">DB2</span>
<svg class="i" style="left:27px;top:347px;" width="16" height="16" viewBox="0 0 16 16"><ellipse cx="8" cy="7.900" rx="7.600" ry="6.800" fill="#c9dcf1" stroke="#4a7fc0" stroke-width=".9"/><path d="M2.600 4.400 L5 3.200 L6.600 4.600 L5.400 6.800 L6.600 9 L5.600 12.400 L4.200 10 L2.600 8 Z M8.400 3.400 L10.400 3.800 L10 5.600 L8.600 5 Z M11 3.600 L13 4.400 L13.600 7.400 L12 8.200 L11.600 6 L10.800 5 Z M9 7 L11 8 L10.400 11 L9.200 12.400 L8.600 9.400 Z" fill="#3e6ea8" opacity=".9"/><path d="M0.600 7 Q8 8.600 15.400 7 M1.600 11 Q8 12.600 14.400 11 M8 1.200 V14.600" fill="none" stroke="#8fb4e0" stroke-width=".5"/></svg>
<span class="t" style="left:49.00px;top:348.20px;font-size:13px;line-height:16.00px;color:#000;letter-spacing:-0.662px;">WMS/WMTS</span>
<svg class="i" style="left:27px;top:365px;" width="16" height="16" viewBox="0 0 16 16"><ellipse cx="8" cy="7.900" rx="7.600" ry="6.800" fill="#c9dcf1" stroke="#4a7fc0" stroke-width=".9"/><path d="M2.600 4.400 L5 3.200 L6.600 4.600 L5.400 6.800 L6.600 9 L5.600 12.400 L4.200 10 L2.600 8 Z M8.400 3.400 L10.400 3.800 L10 5.600 L8.600 5 Z M11 3.600 L13 4.400 L13.600 7.400 L12 8.200 L11.600 6 L10.800 5 Z M9 7 L11 8 L10.400 11 L9.200 12.400 L8.600 9.400 Z" fill="#3e6ea8" opacity=".9"/><path d="M0.600 7 Q8 8.600 15.400 7 M1.600 11 Q8 12.600 14.400 11 M8 1.200 V14.600" fill="none" stroke="#8fb4e0" stroke-width=".5"/></svg>
<span class="t" style="left:49.00px;top:366.20px;font-size:13px;line-height:16.00px;color:#000;letter-spacing:-0.203px;">XYZ Tiles</span>
<svg class="i" style="left:8px;top:370px" width="11" height="7"><path d="M0.8 1 L10 1 L5.4 6.2 Z" fill="#3c3c3c"/></svg>
<svg class="i" style="left:49px;top:384px;" width="13" height="13" viewBox="0 0 13 13"><rect x="0" y="0" width="4.400" height="4.400" fill="#25395a"/><rect x="4.400" y="0" width="4.300" height="4.400" fill="#a9c6e8"/><rect x="8.700" y="0" width="4.300" height="4.400" fill="#2c4468"/><rect x="0" y="4.400" width="4.400" height="4.300" fill="#a9c6e8"/><rect x="4.400" y="4.400" width="4.300" height="4.300" fill="#2f4a72"/><rect x="8.700" y="4.400" width="4.300" height="4.300" fill="#b7d0ee"/><rect x="0" y="8.700" width="4.400" height="4.300" fill="#25395a"/><rect x="4.400" y="8.700" width="4.300" height="4.300" fill="#a0bfe4"/></svg>
<span class="t" style="left:68.90px;top:384.20px;font-size:13px;line-height:16.00px;color:#000;letter-spacing:0.169px;">google maps</span>
<div style="position:absolute;left:4px;top:400px;width:173px;height:18px;background:#308cc6"></div>
<svg class="i" style="left:49px;top:402px;" width="13" height="13" viewBox="0 0 13 13"><rect x="0" y="0" width="4.400" height="4.400" fill="#25395a"/><rect x="4.400" y="0" width="4.300" height="4.400" fill="#a9c6e8"/><rect x="8.700" y="0" width="4.300" height="4.400" fill="#2c4468"/><rect x="0" y="4.400" width="4.400" height="4.300" fill="#a9c6e8"/><rect x="4.400" y="4.400" width="4.300" height="4.300" fill="#2f4a72"/><rect x="8.700" y="4.400" width="4.300" height="4.300" fill="#b7d0ee"/><rect x="0" y="8.700" width="4.400" height="4.300" fill="#25395a"/><rect x="4.400" y="8.700" width="4.300" height="4.300" fill="#a0bfe4"/></svg>
<span class="t" style="left:68.90px;top:402.20px;font-size:13px;line-height:16.00px;color:#fff;letter-spacing:0.279px;">google satellite</span>
<svg class="i" style="left:49px;top:420px;" width="13" height="13" viewBox="0 0 13 13"><rect x="0" y="0" width="4.400" height="4.400" fill="#25395a"/><rect x="4.400" y="0" width="4.300" height="4.400" fill="#a9c6e8"/><rect x="8.700" y="0" width="4.300" height="4.400" fill="#2c4468"/><rect x="0" y="4.400" width="4.400" height="4.300" fill="#a9c6e8"/><rect x="4.400" y="4.400" width="4.300" height="4.300" fill="#2f4a72"/><rect x="8.700" y="4.400" width="4.300" height="4.300" fill="#b7d0ee"/><rect x="0" y="8.700" width="4.400" height="4.300" fill="#25395a"/><rect x="4.400" y="8.700" width="4.300" height="4.300" fill="#a0bfe4"/></svg>
<span class="t" style="left:68.90px;top:420.20px;font-size:13px;line-height:16.00px;color:#000;letter-spacing:0.086px;">OpenStreetMap</span>
<svg class="i" style="left:27px;top:437px;" width="16" height="16" viewBox="0 0 16 16"><ellipse cx="8" cy="7.900" rx="7.600" ry="6.800" fill="#3d68a4" stroke="#2f5790" stroke-width=".8"/><path d="M4.800 2.200 H11.200 V4.400 H4.800 Z M3.600 5.800 H12.400 V8.200 H3.600 Z M4.600 10.600 H11.400 V13 H4.600 Z" fill="#9ebde6" opacity=".85"/><path d="M0.600 5 H15.400 M0.600 9.400 H15.400 M5.400 1.400 V14.400 M10.600 1.400 V14.400" stroke="#dbe7f6" stroke-width=".6"/></svg>
<span class="t" style="left:49.00px;top:438.20px;font-size:13px;line-height:16.00px;color:#000;letter-spacing:-1.210px;">WCS</span>
<svg class="i" style="left:27px;top:455px;" width="16" height="16" viewBox="0 0 16 16"><ellipse cx="8" cy="7.900" rx="7.600" ry="6.800" fill="#fbfdff" stroke="#5b93de" stroke-width="1"/><path d="M0.800 5.400 H15.200 M0.800 10.400 H15.200 M1.800 3 H14.200 M1.800 12.800 H14.200 M8 1.200 V14.600" stroke="#a9c8f0" stroke-width=".8" fill="none"/><ellipse cx="8" cy="7.900" rx="3.600" ry="6.800" fill="none" stroke="#a9c8f0" stroke-width=".8"/><path d="M4.200 5 Q5.400 3.400 6.400 4.800 L8 11.400 L10 4.400 Q11.400 3.400 12.200 5" fill="none" stroke="#4a4f58" stroke-width="1.100"/></svg>
<span class="t" style="left:49.00px;top:456.20px;font-size:13px;line-height:16.00px;color:#000;letter-spacing:-1.161px;">WFS</span>
<svg class="i" style="left:27px;top:473px;" width="16" height="16" viewBox="0 0 16 16"><ellipse cx="8" cy="7.900" rx="7.600" ry="6.800" fill="#fbfdff" stroke="#5b93de" stroke-width="1"/><path d="M0.800 5.400 H15.200 M0.800 10.400 H15.200 M1.800 3 H14.200 M1.800 12.800 H14.200 M8 1.200 V14.600" stroke="#a9c8f0" stroke-width=".8" fill="none"/><ellipse cx="8" cy="7.900" rx="3.600" ry="6.800" fill="none" stroke="#a9c8f0" stroke-width=".8"/></svg>
<span class="t" style="left:49.00px;top:474.20px;font-size:13px;line-height:16.00px;color:#000;letter-spacing:-1.051px;">OWS</span>
<svg class="i" style="left:27px;top:491px;" width="16" height="16" viewBox="0 0 16 16"><ellipse cx="8" cy="7.900" rx="7.600" ry="6.800" fill="#c9dcf1" stroke="#4a7fc0" stroke-width=".9"/><path d="M2.600 4.400 L5 3.200 L6.600 4.600 L5.400 6.800 L6.600 9 L5.600 12.400 L4.200 10 L2.600 8 Z M8.400 3.400 L10.400 3.800 L10 5.600 L8.600 5 Z M11 3.600 L13 4.400 L13.600 7.400 L12 8.200 L11.600 6 L10.800 5 Z M9 7 L11 8 L10.400 11 L9.200 12.400 L8.600 9.400 Z" fill="#3e6ea8" opacity=".9"/><path d="M0.600 7 Q8 8.600 15.400 7 M1.600 11 Q8 12.600 14.400 11 M8 1.200 V14.600" fill="none" stroke="#8fb4e0" stroke-width=".5"/><circle cx="4.400" cy="11.600" r="4" fill="#dfe8f4" stroke="#2a3f5e" stroke-width=".6"/><path d="M1.600 10 L4 8.600 L5.400 10.200 L4 12 L5 14.600 L3 14.800 L1.400 13 Z M6 9.600 L7.800 10.800 L7.600 13.400 L6.200 12.600 Z" fill="#22344f"/></svg>
<span class="t" style="left:49.00px;top:492.20px;font-size:13px;line-height:16.00px;color:#000;letter-spacing:-0.012px;">ArcGisMapServer</span>
<svg class="i" style="left:27px;top:509px;" width="16" height="16" viewBox="0 0 16 16"><ellipse cx="8" cy="7.900" rx="7.600" ry="6.800" fill="#fbfdff" stroke="#5b93de" stroke-width="1"/><path d="M0.800 5.400 H15.200 M0.800 10.400 H15.200 M1.800 3 H14.200 M1.800 12.800 H14.200 M8 1.200 V14.600" stroke="#a9c8f0" stroke-width=".8" fill="none"/><ellipse cx="8" cy="7.900" rx="3.600" ry="6.800" fill="none" stroke="#a9c8f0" stroke-width=".8"/><path d="M4.200 5 Q5.400 3.400 6.400 4.800 L8 11.400 L10 4.400 Q11.400 3.400 12.200 5" fill="none" stroke="#4a4f58" stroke-width="1.100"/><circle cx="4.400" cy="11.600" r="4" fill="#dfe8f4" stroke="#2a3f5e" stroke-width=".6"/><path d="M1.600 10 L4 8.600 L5.400 10.200 L4 12 L5 14.600 L3 14.800 L1.400 13 Z M6 9.600 L7.800 10.800 L7.600 13.400 L6.200 12.600 Z" fill="#22344f"/></svg>
<span class="t" style="left:49.00px;top:510.20px;font-size:13px;line-height:16.00px;color:#000;letter-spacing:0.048px;">ArcGisFeatureServer</span>
<svg class="i" style="left:27px;top:527px;" width="16" height="16" viewBox="0 0 16 16"><g fill="#5b8fd0"><ellipse cx="8" cy="3.400" rx="1.600" ry="3.200"/><ellipse cx="8" cy="12.600" rx="1.600" ry="3.200"/><ellipse cx="8" cy="3.400" rx="1.600" ry="3.200" transform="rotate(60 8 8)"/><ellipse cx="8" cy="3.400" rx="1.600" ry="3.200" transform="rotate(120 8 8)"/><ellipse cx="8" cy="3.400" rx="1.600" ry="3.200" transform="rotate(240 8 8)"/><ellipse cx="8" cy="3.400" rx="1.600" ry="3.200" transform="rotate(300 8 8)"/><circle cx="8" cy="8" r="1.800"/></g></svg>
<span class="t" style="left:49.00px;top:528.20px;font-size:13px;line-height:16.00px;color:#000;letter-spacing:-0.222px;">GeoNode</span>
<div style="position:absolute;left:132px;top:576px;width:1px;height:1px;background:#b7b2ac"></div>
<div style="position:absolute;left:135px;top:576px;width:1px;height:1px;background:#b7b2ac"></div>
<div style="position:absolute;left:138px;top:576px;width:1px;height:1px;background:#b7b2ac"></div>
<div style="position:absolute;left:141px;top:576px;width:1px;height:1px;background:#b7b2ac"></div>
<div style="position:absolute;left:144px;top:576px;width:1px;height:1px;background:#b7b2ac"></div>
<div style="position:absolute;left:147px;top:576px;width:1px;height:1px;background:#b7b2ac"></div>
<span class="t" style="left:6.50px;top:581.50px;font-size:13px;line-height:16.00px;color:#000;letter-spacing:-0.003px;">Layers</span>
<svg class="i" style="left:247px;top:584px" width="11" height="11"><rect x="0.5" y="0.5" width="10" height="10" rx="2.2" fill="none" stroke="#6f6b66" stroke-width="1"/><rect x="4.5" y="2.5" width="4" height="4" rx="1" fill="none" stroke="#6f6b66"/><rect x="2.5" y="4.5" width="4" height="4" rx="1" fill="#efebe7" stroke="#6f6b66"/></svg>
<svg class="i" style="left:261px;top:584px" width="11" height="11"><rect x="0.5" y="0.5" width="10" height="10" rx="2.2" fill="none" stroke="#6f6b66" stroke-width="1"/><path d="M3 3 L8 8 M8 3 L3 8" stroke="#5d5a55" stroke-width="1.8"/></svg>
<svg class="i" style="left:11px;top:606px;" width="16" height="16" viewBox="0 0 16 16"><path d="M0.800 9.400 L5 4.600 L9.800 8.600 L7.400 14 Z" fill="#e23a3a"/><path d="M1.200 6.600 L5.600 3.200 L10 7 L6 10.800 Z" fill="#f5d327"/><path d="M2 4.600 L6 2.200 L10.400 5.200 L6.600 8.400 Z" fill="#4f83c4"/><path d="M5 9.800 L9 6.600 L12.200 10 L8 14.600 Z" fill="#d9b36a" stroke="#a8803a" stroke-width=".5"/><path d="M10 8 L15.400 2.200" stroke="#e0982a" stroke-width="1.700" stroke-linecap="round"/></svg>
<svg class="i" style="left:36px;top:606px;" width="16" height="16" viewBox="0 0 16 16"><path d="M1 8.600 V15 H9" fill="none" stroke="#8a8a8a" stroke-width=".9"/><rect x="2.800" y="6" width="7" height="7.400" fill="#efefef" stroke="#8a8a8a" stroke-width=".9"/><rect x="5" y="3.600" width="8.400" height="8.400" fill="#efefef" stroke="#8a8a8a" stroke-width=".9"/><path d="M7.400 9.400 V2.400 Q7.400 0.400 9 0.400 Q10.600 0.400 10.600 2.400 V8.400 Q10.600 9.600 9.600 9.600 Q8.800 9.600 8.800 8.400 V3.400" fill="none" stroke="#3f6fb5" stroke-width=".9"/><rect x="9.400" y="10" width="6" height="6" rx="1.300" fill="#5a9c5a"/><circle cx="12.400" cy="13" r="1.900" fill="#d6ead6"/></svg>
<svg class="i" style="left:61px;top:606px;" width="16" height="16" viewBox="0 0 16 16"><path d="M0.400 7.600 Q7 1 14.400 7.600 Q7 14 0.400 7.600 Z" fill="#f7f7f7" stroke="#9a9a9a" stroke-width=".8"/><path d="M1.400 5 Q7 0.800 13.600 4.800" fill="none" stroke="#b5b5b5" stroke-width=".6"/><circle cx="7.200" cy="7.400" r="3.300" fill="#5b8fd0" stroke="#4a78b0" stroke-width=".5"/><circle cx="7.200" cy="7.400" r="1.500" fill="#1f2f45"/><circle cx="6.400" cy="6.600" r=".7" fill="#fff"/><path d="M12.600 12.600 H18.400 L15.500 15.800 Z" fill="#333"/></svg>
<svg class="i" style="left:86px;top:606px;" width="16" height="16" viewBox="0 0 16 16"><path d="M1 1.300 Q8 -.2 15 1.300 V3 L9.600 9 V14 L6.400 15.400 V9 L1 3 Z" fill="#6c98cb" stroke="#4a78b0" stroke-width=".7" stroke-linejoin="round"/><path d="M1.800 2.300 H14.200" stroke="#f7e436" stroke-width="1.600"/></svg>
<svg class="i" style="left:111px;top:606px;" width="16" height="16" viewBox="0 0 16 16"><text x="1" y="10.600" font-family="Liberation Serif" font-size="19" fill="#5c2a80">ε</text><path d="M8.400 9 H16.400 L14.200 12 V16 H10.600 V12 Z" fill="#b9b9b9" stroke="#8a8a8a" stroke-width=".5"/><path d="M9 9.400 H15.800" stroke="#efefef" stroke-width="1"/></svg>
<svg class="i" style="left:148px;top:606px;" width="16" height="16" viewBox="0 0 16 16"><g transform="translate(.4 .4)"><path d="M0.900 2.300 H15.100 M2.400 2.300 V13.600 M2.400 6.600 H4.700 M2.400 12.600 H4.700" stroke="#a7a39d" stroke-width=".9" fill="none"/><rect x="4.800" y="5.200" width="2.700" height="2.700" fill="#fff" stroke="#f29a13" stroke-width="1"/><rect x="4.800" y="11.300" width="2.700" height="2.700" fill="#fff" stroke="#f29a13" stroke-width="1"/><path d="M11 14.400 L16 8.500 H12.600 V0.800 H9.400 V8.500 H6 Z" fill="#5b8fd0" stroke="#2d4a6e" stroke-width=".9" stroke-linejoin="round"/></g></svg>
<svg class="i" style="left:173px;top:606px;" width="16" height="16" viewBox="0 0 16 16"><g transform="translate(.4 -.3)"><path d="M0.900 2.300 H15.100 M2.400 2.300 V13.600 M2.400 6.600 H4.700 M2.400 12.600 H4.700" stroke="#a7a39d" stroke-width=".9" fill="none"/><rect x="4.800" y="5.200" width="2.700" height="2.700" fill="#fff" stroke="#f29a13" stroke-width="1"/><rect x="4.800" y="11.300" width="2.700" height="2.700" fill="#fff" stroke="#f29a13" stroke-width="1"/><path d="M11 0 L16 5.900 H12.600 V13.800 H9.400 V5.900 H6 Z" fill="#5b8fd0" stroke="#2d4a6e" stroke-width=".9" stroke-linejoin="round"/></g></svg>
<svg class="i" style="left:198px;top:606px;" width="16" height="16" viewBox="0 0 16 16"><rect x="1.300" y="1.700" width="11.600" height="11.200" fill="#eeeeee" stroke="#7a7a7a" stroke-width="1"/><rect x="8.900" y="10.600" width="6.300" height="4.600" rx="1.300" fill="#e0283a"/><path d="M10.200 12.900 H13.900" stroke="#fff" stroke-width="1.200"/></svg>
<svg class="i" style="left:131px;top:611px" width="9" height="6"><path d="M0.5 0.8 L8.5 0.8 L4.5 5.2 Z" fill="#3c3c3c"/></svg>
<div style="position:absolute;left:3px;top:630px;width:271px;height:388px;background:#fff;border:1px solid #aca7a0;box-sizing:border-box"></div>
<svg class="i" style="left:27px;top:633px" width="14" height="14"><rect x="0.5" y="0.5" width="13" height="13" fill="#fff" stroke="#c6c2bc"/><path d="M3.2 6.6 L6 10.8 L10.8 2.8" fill="none" stroke="#111" stroke-width="1.8"/></svg>
<div style="position:absolute;left:47px;top:632px;width:16px;height:16px;background:#8d5a99;border:1px solid rgba(60,40,60,.45);box-sizing:border-box"></div>
<span class="t" style="left:68.80px;top:632.62px;font-size:13.6px;line-height:16.74px;color:#000;letter-spacing:0.500px;font-weight:bold;">0.5 mile buffer</span>
<svg class="i" style="left:27px;top:651px" width="14" height="14"><rect x="0.5" y="0.5" width="13" height="13" fill="#fff" stroke="#c6c2bc"/><path d="M3.2 6.6 L6 10.8 L10.8 2.8" fill="none" stroke="#111" stroke-width="1.8"/></svg>
<svg class="i" style="left:47px;top:650px" width="16" height="16"><circle cx="8" cy="8.3" r="2.7" fill="#f4960f" stroke="#8a6a3a" stroke-width="0.9"/></svg>
<span class="t" style="left:68.80px;top:650.62px;font-size:13.6px;line-height:16.74px;color:#000;letter-spacing:0.357px;font-weight:bold;">behavioralHealth</span>
<svg class="i" style="left:27px;top:669px" width="14" height="14"><rect x="0.5" y="0.5" width="13" height="13" fill="#fff" stroke="#c6c2bc"/><path d="M3.2 6.6 L6 10.8 L10.8 2.8" fill="none" stroke="#111" stroke-width="1.8"/></svg>
<div style="position:absolute;left:47px;top:668px;width:16px;height:16px;background:#f3a6b2;border:1px solid rgba(60,40,60,.45);box-sizing:border-box"></div>
<span class="t" style="left:68.80px;top:668.62px;font-size:13.6px;line-height:16.74px;color:#000;letter-spacing:0.290px;font-weight:bold;">tracts_interseting_0.5_buffer</span>
<div style="position:absolute;left:4px;top:685px;width:269px;height:18px;background:#308cc6"></div>
<svg class="i" style="left:27px;top:687px" width="14" height="14"><rect x="0.5" y="0.5" width="13" height="13" fill="#fff" stroke="#c6c2bc"/><path d="M3.2 6.6 L6 10.8 L10.8 2.8" fill="none" stroke="#111" stroke-width="1.8"/></svg>
<div style="position:absolute;left:47px;top:686px;width:16px;height:16px;background:#91526f;border:1px solid rgba(60,40,60,.45);box-sizing:border-box"></div>
<span class="t" style="left:68.80px;top:686.62px;font-size:13.6px;line-height:16.74px;color:#fff;letter-spacing:0.231px;font-weight:bold;text-decoration:underline;text-underline-offset:2px;">riverside_tracts</span>
<svg class="i" style="left:27px;top:705px" width="14" height="14"><rect x="0.5" y="0.5" width="13" height="13" fill="#fff" stroke="#c6c2bc"/></svg>
<div style="position:absolute;left:47px;top:704px;width:16px;height:16px;background:#987db7;border:1px solid rgba(60,40,60,.45);box-sizing:border-box"></div>
<span class="t" style="left:68.80px;top:704.62px;font-size:13.6px;line-height:16.74px;color:#b8b8b8;letter-spacing:0.117px;font-weight:bold;font-style:italic;">tract_boundary_scag_2010</span>
<svg class="i" style="left:256px;top:633px" width="16" height="14"><rect x="1.5" y="3.5" width="13" height="7" rx="1" fill="#fff" stroke="#777"/><path d="M3.5 1v2M6.5 1v2M9.5 1v2M12.5 1v2M3.5 11v2M6.5 11v2M9.5 11v2M12.5 11v2" stroke="#777"/></svg>
<div style="position:absolute;left:280px;top:133px;width:1349px;height:885px;background:#fff;border:1px solid #aaa59f;box-sizing:border-box"></div>
<svg class="i" style="left:281px;top:134px" width="1347" height="883" viewBox="281 134 1347 883"><path d="M359.3 464.4 L432.6 464.4 L432.8 469.6 L491.5 469.9 L491.7 475.6 L608.1 475.6 L608.3 464.4 L1247.2 463.9 L1247.4 446.5 L1595.9 446.3 C1595.8 447.2 1595.2 449.2 1595.3 451.7 C1595.4 454.2 1596.7 458.6 1596.5 461.5 C1596.3 464.4 1595.3 467.4 1593.9 469.4 C1592.5 471.4 1589.7 472.5 1588.0 473.3 C1586.3 474.1 1584.3 473.8 1583.5 474.3 C1582.7 474.8 1582.8 475.5 1583.3 476.3 C1583.8 477.1 1587.5 477.5 1586.7 479.1 C1585.9 480.7 1581.2 483.7 1578.3 486.0 C1575.4 488.3 1572.0 491.3 1569.4 492.8 C1566.8 494.3 1564.7 493.7 1562.6 494.8 C1560.5 495.9 1558.0 497.6 1556.7 499.7 C1555.4 501.8 1553.7 505.7 1554.8 507.5 C1555.9 509.3 1561.5 509.4 1563.6 510.5 C1565.7 511.6 1567.3 513.1 1567.5 514.4 C1567.7 515.7 1565.8 517.6 1564.6 518.3 C1563.4 518.9 1560.3 517.3 1560.6 518.3 C1560.9 519.3 1565.1 522.4 1566.5 524.2 C1567.9 526.0 1569.3 527.6 1569.1 529.1 C1568.9 530.6 1567.1 532.2 1565.5 533.0 C1563.9 533.8 1560.8 532.8 1559.7 533.6 C1558.6 534.4 1558.2 535.7 1558.7 537.9 C1559.2 540.1 1562.3 544.6 1562.6 546.7 C1562.9 548.8 1559.6 546.2 1560.6 550.6 C1561.6 555.0 1567.1 569.0 1568.5 573.1 C1569.9 577.2 1569.2 573.9 1569.0 575.0 C1568.8 576.1 1568.1 578.6 1567.5 579.9 C1566.9 581.2 1564.8 581.3 1565.5 582.8 C1566.2 584.3 1570.2 586.9 1571.4 588.7 C1572.7 590.5 1573.3 592.0 1573.0 593.6 C1572.7 595.2 1571.5 597.0 1569.4 598.5 C1567.3 600.0 1562.5 600.9 1560.6 602.4 C1558.6 603.9 1557.1 605.8 1557.7 607.3 C1558.3 608.8 1563.8 610.2 1564.0 611.2 C1564.2 612.2 1559.8 612.4 1558.7 613.2 C1557.6 614.0 1557.0 614.8 1557.3 616.1 C1557.6 617.4 1560.5 619.4 1560.6 621.0 C1560.7 622.6 1557.5 624.3 1557.7 625.9 C1557.9 627.5 1561.9 629.0 1561.6 630.8 C1561.3 632.6 1556.8 634.6 1555.7 636.7 C1554.6 638.8 1554.0 640.6 1554.8 643.5 C1555.6 646.4 1561.9 650.6 1560.6 653.9 C1559.3 657.2 1549.5 660.4 1546.9 663.1 C1544.3 665.8 1546.6 668.1 1545.0 669.9 C1543.4 671.7 1539.7 672.0 1537.2 673.8 C1534.8 675.6 1532.9 677.6 1530.3 680.7 C1527.7 683.8 1523.2 688.9 1521.5 692.4 C1519.8 695.9 1520.3 700.1 1520.1 701.6 L1439.3 702.2 L1438.3 703.8 L1100.0 704.3 L645.0 704.2 L569.0 704.2 L568.0 703.5 L545.0 703.4 L485.4 702.6 L484.3 695.6 L434.3 679.4 L436.7 673.5 L379.3 673.5 L378.8 672.0 L381.8 671.5 L381.8 667.9 L378.8 667.6 L378.3 663.2 L379.3 661.2 L416.5 612.8 L392.9 594.9 L369.2 592.4 L368.4 573.6 L362.0 571.8 L351.2 569.1 L333.1 550.0 L313.7 532.9 L313.3 529.6 L316.6 527.4 L314.4 526.3 L315.5 523.0 L313.3 521.3 L321.4 521.1 L321.4 507.1 L338.4 507.1 L339.1 488.4 L359.3 482.1 Z" fill="#ffff00" stroke="#232323" stroke-width="1" stroke-linejoin="round"/><g fill="#f3a6b2" stroke="#232323" stroke-width="1" stroke-linejoin="round"><path d="M325.8 521.1 L328.4 518.9 L334.3 516.7 L338.0 515.2 L341.7 515.6 L346.8 518.2 L354.2 520.4 L354.2 523.3 L343.1 524.4 L332.1 523.3 Z"/><path d="M346.1 508.2 L351.2 506.0 L352.3 510.1 L357.9 510.4 L358.6 514.5 L361.5 513.0 L368.2 510.8 L371.1 507.1 L374.8 500.1 L377.4 499.8 L378.1 502.7 L377.4 507.1 L378.9 511.5 L377.7 515.2 L372.6 516.0 L368.9 518.2 L364.5 518.2 L363.0 519.6 L360.8 518.9 L359.3 516.7 L357.1 518.2 L353.4 518.9 L350.5 515.2 Z"/><path d="M353.4 518.9 L361.5 518.9 L363.8 523.3 L361.5 525.5 L354.2 525.5 L353.1 522.6 Z"/><path d="M354.2 525.9 L363.0 525.5 L368.2 528.1 L368.9 535.0 L369.6 539.2 L363.8 537.0 L359.3 530.7 L354.2 527.7 Z"/><path d="M368.9 528.5 L376.3 526.3 L385.1 522.6 L391.7 521.5 L398.4 522.6 L402.0 520.4 L407.9 524.1 L407.2 531.4 L405.0 534.4 L399.1 536.6 L397.6 545.4 L380.7 547.6 L379.2 540.3 L372.6 533.6 Z"/><path d="M387.3 507.9 L395.4 504.9 L398.4 503.4 L402.0 504.2 L405.0 507.1 L413.1 503.4 L422.7 499.4 L424.9 502.0 L414.6 507.1 L407.2 511.5 L403.5 513.0 L398.4 513.0 L392.5 516.0 L389.5 513.0 L393.9 510.8 Z"/><path d="M421.9 493.1 L432.2 492.0 L442.5 493.1 L442.5 496.8 L433.7 497.6 L433.0 501.2 L427.8 504.2 L424.9 502.0 L421.9 499.0 Z"/><path d="M470.0 501.2 L479.8 501.2 L483.7 506.1 L483.7 531.6 L479.8 528.7 L476.9 529.7 L470.0 530.7 L457.2 530.2 L457.2 520.8 L465.1 521.3 L465.1 515.9 L457.2 516.9 L455.3 513.5 L460.2 511.5 L470.0 511.0 Z"/><path d="M476.9 529.7 L479.8 528.7 L483.7 533.6 L499.4 533.6 L499.4 539.5 L498.5 544.4 L512.2 545.4 L521.0 540.5 L526.9 540.5 L515.1 555.7 L505.3 557.2 L505.3 560.0 L504.8 562.6 L504.3 562.6 L494.0 563.0 L494.5 567.5 L498.5 569.4 L491.6 575.8 L479.8 582.7 L477.9 587.6 L473.9 596.4 L470.0 597.4 L467.1 593.2 L468.0 586.3 L467.1 583.4 L470.0 579.4 L470.0 550.8 L465.1 550.1 L463.1 546.6 L457.2 545.6 L456.3 543.2 L470.0 542.2 L480.8 541.5 Z"/><path d="M469.1 690.2 L474.0 687.7 L478.9 684.8 L479.4 679.9 L484.8 677.4 L489.7 672.5 L494.6 672.0 L496.6 666.1 L501.5 659.7 L507.4 663.7 L511.3 662.2 L514.3 659.7 L523.1 657.3 L524.1 659.3 L521.6 663.2 L521.6 666.1 L528.0 668.1 L523.1 673.5 L520.1 671.0 L521.6 675.0 L525.1 682.8 L523.1 685.8 L517.2 687.7 L511.3 684.8 L508.4 689.7 L501.5 692.6 L493.7 692.6 L491.7 696.5 L489.7 688.7 L482.9 690.7 L481.9 694.6 Z"/><path d="M443.1 473.6 L445.7 472.9 L451.5 474.4 L451.5 476.9 L456.0 475.1 L464.8 475.1 L469.2 479.1 L473.6 481.7 L477.3 485.8 L477.3 498.3 L469.2 496.5 L461.9 493.5 L458.2 493.1 L457.4 489.5 L458.5 485.0 L456.0 483.2 L455.2 492.4 L450.8 490.6 L447.1 492.8 L443.1 492.4 L443.1 484.7 L440.1 484.7 L440.1 488.4 L438.3 488.4 L437.2 483.6 L440.5 481.0 L441.2 476.9 Z"/><path d="M629.4 464.3 L691.7 464.3 L691.7 492.8 L688.3 492.8 L688.3 495.7 L691.7 495.7 L691.7 498.2 L684.8 498.2 L684.8 504.1 L691.7 504.1 L691.7 510.4 L684.8 510.4 L684.8 515.8 L691.7 515.8 L691.7 522.7 L671.1 522.7 L670.6 525.2 L664.2 525.2 L663.7 522.7 L650.5 522.7 L650.0 534.0 L643.1 534.5 L642.6 540.4 L636.7 540.9 L636.7 555.8 L630.4 555.8 L629.4 553.8 L626.4 554.8 L621.0 554.8 L617.1 556.8 L616.1 561.7 L611.2 563.1 L609.3 563.6 L613.2 569.5 L615.1 572.5 L609.3 574.4 L604.3 576.4 L597.5 575.4 L596.5 579.8 L588.6 579.8 L588.6 574.4 L587.2 568.5 L587.7 564.6 L584.7 564.1 L584.7 553.8 L579.8 549.4 L579.3 545.0 L579.3 547.2 L577.9 535.0 L601.4 544.8 L601.4 539.9 L604.3 536.0 L612.2 534.0 L611.2 532.5 L612.2 525.7 L615.6 523.2 L609.3 523.2 L608.8 520.3 L604.3 519.8 L604.3 516.3 L608.8 515.8 L609.3 510.9 L615.1 510.4 L615.6 504.6 L628.9 504.6 L628.9 498.2 L626.4 488.4 L623.0 484.9 L621.5 481.5 L624.5 476.1 L625.9 470.7 L623.5 469.7 L629.4 469.7 Z"/><path d="M788.9 556.9 L802.6 556.9 L802.6 567.2 L795.8 567.2 L792.8 567.7 L787.9 572.6 L785.9 571.6 L788.9 564.7 Z"/><path d="M883.9 573.6 L892.8 574.0 L897.7 578.5 L904.5 580.9 L911.4 585.3 L917.3 592.2 L911.4 591.2 L911.4 602.0 L880.0 602.5 L879.2 602.5 L879.2 597.1 L883.9 597.1 Z"/><path d="M1521.5 623.0 L1542.4 623.0 L1542.4 640.6 L1521.5 640.6 Z"/></g><g fill="#ffff00" stroke="#232323" stroke-width="1" stroke-linejoin="round"><path d="M469.8 507.1 L473.6 507.1 L473.6 510.8 L469.8 510.8 Z"/><path d="M470.0 571.1 L479.8 571.1 L479.8 578.5 L470.0 579.4 Z"/><path d="M629.9 498.7 L636.7 498.7 L636.7 507.0 L629.9 507.0 Z"/><path d="M685.6 511.1 L687.8 511.1 L687.3 513.9 L685.6 513.9 Z"/><path d="M598.0 566.1 L606.3 566.1 L608.8 570.5 L601.4 570.5 L598.0 568.6 Z"/><path d="M598.0 562.2 L601.4 562.2 L601.9 564.1 L598.0 564.6 Z"/><path d="M884.1 581.6 L890.8 581.9 L889.8 584.3 L884.9 584.3 Z"/><path d="M884.4 586.3 L887.9 586.8 L888.3 590.2 L884.4 590.2 Z"/></g><path fill="none" stroke="#232323" stroke-width="1" stroke-linejoin="round" d="M373.3 464.4 L373.7 469.6 L380.7 474.7 L388.8 478.4 L391.0 482.8 L393.2 487.2 M379.2 464.4 L379.6 469.6 L380.7 474.7 L381.1 487.2 M396.9 464.4 L397.3 469.6 L398.4 474.7 L400.6 480.6 L403.5 488.7 L402.8 490.9 M416.0 464.4 L413.8 468.8 L416.0 474.0 M359.3 482.1 L366.7 479.5 L379.2 475.5 L391.0 470.3 L396.2 471.0 L408.7 473.3 L416.0 474.0 L430.0 475.5 M366.7 479.5 L366.7 487.2 M373.3 478.4 L373.3 487.2 M373.3 482.1 L381.1 482.1 M384.4 487.2 L384.4 483.6 L391.0 482.8 M380.7 474.7 L391.0 479.9 L400.6 476.9 L408.7 473.3 M408.7 473.3 L410.1 477.7 L407.9 482.1 L403.5 485.0 L393.9 487.2 M416.0 478.4 L423.4 480.6 L424.9 478.4 L419.0 476.9 L416.0 478.4 L410.1 483.6 M412.4 484.3 L409.4 485.8 L405.7 484.3 M430.0 475.5 L424.9 482.1 L420.5 485.8 L413.1 488.7 L403.5 490.2 M346.1 487.6 L393.2 487.2 L402.8 490.9 L411.6 492.4 L430.0 485.0 M346.1 487.6 L346.5 498.3 L349.0 498.3 L349.0 487.6 M350.1 488.0 L350.1 496.1 L356.0 496.1 L356.0 488.0 M357.1 492.8 L361.5 491.7 L370.4 491.7 L371.1 494.6 L366.0 495.3 L360.8 499.8 L360.1 502.0 M343.9 506.4 L346.8 503.4 L360.1 497.6 L366.0 495.3 L372.6 492.4 L376.3 490.2 L383.6 489.5 L391.0 490.9 L398.4 494.6 L401.3 497.6 L401.3 501.2 M325.8 521.1 L338.0 514.5 L343.5 508.6 L343.9 506.4 M351.2 505.7 L361.5 501.2 L372.6 503.4 L373.3 496.8 L371.1 494.6 M367.4 496.8 L367.1 504.2 M360.1 502.0 L360.8 504.2 M352.3 506.0 L367.4 505.7 L367.1 510.8 M358.6 505.7 L358.2 514.5 M338.0 514.5 L344.6 511.5 L346.8 510.8 M342.4 516.7 L347.6 511.5 M372.6 496.8 L377.7 495.3 L380.7 498.3 L382.9 504.2 L384.4 510.1 L383.6 514.5 L380.7 511.5 L379.2 505.7 L378.5 501.2 M381.8 498.3 L390.3 496.8 L391.0 495.3 L396.2 494.6 L396.9 497.6 L391.7 498.3 M401.3 497.6 L411.6 497.6 L411.6 493.9 L421.9 494.2 M416.0 494.6 L416.0 498.3 M402.0 498.7 L421.9 498.7 M382.9 504.2 L398.4 499.8 M384.4 507.1 L393.2 503.4 M383.6 514.5 L393.9 510.8 M387.3 518.2 L401.3 513.0 M391.0 521.1 L403.5 515.2 M386.6 501.2 L391.0 513.0 M391.0 501.2 L395.4 511.5 M393.2 517.4 L396.9 521.1 M396.9 516.0 L400.6 519.6 M405.0 504.2 L409.4 502.0 L414.6 507.1 L405.7 516.0 L402.0 513.0 M408.7 511.5 L420.5 507.1 M413.1 503.4 L416.8 508.6 M403.5 515.2 L413.8 518.9 L411.6 521.1 L402.0 520.4 M427.8 501.2 L427.8 521.9 L413.8 521.1 M407.9 524.1 L419.0 522.6 L430.0 532.2 M313.3 529.6 L314.0 529.3 M323.6 524.5 L325.8 522.6 L333.8 524.5 M364.5 523.3 L371.9 516.7 L377.7 515.2 M367.4 524.1 L376.3 517.4 M371.1 525.5 L379.2 518.9 M374.1 526.3 L382.2 521.1 M364.5 523.3 L374.1 526.3 L383.6 522.6 M368.9 518.2 L374.1 524.8 M374.8 516.7 L379.2 523.3 M431.0 486.7 L427.8 492.4 M431.0 472.7 L429.7 475.2 L425.8 482.6 L420.9 489.4 M430.7 492.4 L431.0 492.4 M431.0 505.4 L428.7 507.1 L428.7 521.8 L413.0 519.9 M428.7 515.9 L431.0 515.9 M449.0 534.0 L449.4 534.6 L452.8 534.0 M455.6 534.0 L459.2 538.5 L470.0 540.5 M428.7 521.8 L431.0 522.2 M408.1 523.8 L418.9 523.8 L430.7 532.6 L431.0 532.6 M380.7 546.4 L408.1 546.4 L412.1 549.3 L427.8 544.4 L457.2 543.4 L470.0 542.4 M436.6 543.4 L438.6 551.3 L437.6 560.0 M377.7 547.3 L382.6 554.2 L384.6 560.0 M380.7 547.3 L386.5 560.0 M491.6 545.4 L498.5 545.4 L498.5 550.3 L491.6 550.3 L491.6 545.4 M499.4 555.7 L499.4 551.3 L494.5 551.3 L494.5 555.7 M519.0 484.5 L519.1 484.5 L528.9 489.4 L534.8 493.4 L541.6 501.2 L536.7 503.2 L530.8 502.2 L519.0 502.2 M519.0 480.7 L521.0 482.6 L532.8 485.5 L545.6 487.5 L551.5 491.4 L558.3 497.3 L562.2 500.2 L577.9 499.7 L585.8 498.3 M554.4 476.2 L561.3 485.5 L568.1 482.6 L570.1 480.6 L567.2 481.1 L570.6 477.7 L570.1 476.2 M561.3 485.5 L568.1 491.4 L578.9 499.3 M565.2 491.2 L568.1 495.8 L574.0 495.3 L588.7 492.4 L565.2 491.2 M530.8 503.2 L533.8 506.1 L540.7 510.0 L548.5 518.9 L551.5 520.8 L562.2 529.7 L573.0 532.6 L577.9 538.5 M562.2 529.7 L553.9 535.1 L553.4 540.5 L567.2 546.4 L567.2 560.0 M519.0 511.9 L525.0 511.0 L528.9 515.0 L529.9 520.8 L532.8 528.7 L533.8 535.6 L527.9 539.5 L526.9 540.5 M533.8 535.6 L544.6 532.6 L553.9 535.1 M500.4 534.0 L500.4 538.5 L506.3 539.5 L512.2 546.4 M499.4 539.5 L500.4 544.4 L508.3 544.4 M529.9 542.4 L531.3 548.3 L532.8 555.7 L538.7 555.2 L542.6 551.3 L548.5 549.3 L554.4 548.3 L558.3 550.3 L562.2 554.2 L567.2 558.1 M522.0 560.0 L522.0 556.7 L532.8 556.7 M542.6 551.3 L546.5 560.0 M519.0 487.2 L519.1 486.0 L519.0 486.0 M362.0 571.8 L367.9 566.7 L366.4 561.8 L372.8 556.9 L380.2 556.4 M377.7 550.0 L383.6 560.8 L381.6 562.8 L381.1 570.6 L388.5 571.1 L393.9 572.1 L394.4 565.7 L391.5 563.2 L387.5 562.8 L383.6 554.9 L383.6 550.0 M393.9 572.1 L403.2 578.5 L409.1 580.4 L417.9 582.9 L425.8 584.3 L433.7 585.8 L437.6 589.3 L438.4 591.0 M447.0 591.0 L449.4 589.3 L449.4 583.4 L446.4 578.5 L444.4 573.6 L447.4 570.6 L446.9 564.7 L443.5 563.7 L443.0 560.3 L438.6 559.3 L438.6 550.0 M443.0 560.3 L451.3 562.8 L463.1 565.2 L465.1 571.1 L470.0 571.1 M409.1 580.4 L405.2 593.2 L398.8 598.6 M400.3 599.6 L408.1 594.7 L411.0 594.5 M425.8 584.3 L429.1 591.0 M459.4 591.0 L461.1 590.2 L467.0 590.2 M449.4 589.3 L450.8 591.0 M411.0 631.9 L410.1 633.4 L408.1 631.5 L400.3 634.4 M472.9 562.8 L479.8 562.3 L480.3 559.3 L485.7 558.8 L486.2 556.4 M481.8 568.2 L493.6 567.7 M530.8 550.0 L532.8 555.9 L541.6 552.9 L546.5 559.8 L548.5 562.8 L547.5 569.6 L545.6 573.6 L546.1 580.4 M532.8 555.9 L522.0 556.9 L522.0 563.7 L518.6 564.7 L519.1 569.6 L521.0 570.6 L522.0 567.7 L525.9 568.2 L526.4 579.4 M519.1 567.7 L502.4 566.7 L494.5 567.2 M502.4 566.7 L481.8 582.4 L477.9 587.3 M498.5 569.1 L512.2 578.5 L506.3 579.4 L506.3 589.3 M505.8 579.4 L526.4 579.4 L542.6 580.9 L556.4 578.9 L567.2 578.9 M567.2 550.0 L567.6 579.4 L567.2 594.2 L561.3 596.6 L554.4 599.1 L552.9 602.0 L555.4 605.0 L566.2 604.5 L572.1 602.0 L591.7 601.5 M520.0 579.4 L520.0 591.0 M526.4 579.4 L526.9 586.3 L530.8 590.2 L550.5 590.2 L550.5 596.1 M529.0 596.1 L567.2 595.6 M491.6 586.3 L499.4 584.8 L505.3 586.3 M499.4 584.8 L499.4 591.0 M491.6 586.3 L492.1 591.0 M504.2 591.0 L519.1 587.3 M506.3 589.3 L507.2 591.0 M529.0 619.3 L547.5 619.7 L547.5 644.2 L554.4 647.2 L568.1 648.1 L569.1 650.0 M529.0 632.0 L529.9 633.4 L530.4 636.4 M547.5 620.7 L529.0 642.1 M529.0 636.5 L547.5 636.4 M529.9 642.2 L547.5 642.2 M547.5 620.7 L556.4 624.6 L564.2 620.7 L576.0 619.7 L578.4 615.8 L577.0 607.9 L575.0 605.0 L577.9 603.0 M568.1 567.7 L573.0 567.2 L573.0 564.7 L588.3 564.7 M487.8 591.0 L489.6 587.3 L491.6 586.3 M477.9 587.3 L477.9 590.2 L486.7 590.2 M440.2 664.0 L436.7 673.5 M472.1 664.0 L472.1 664.2 L465.2 665.1 L463.2 669.1 L452.4 670.0 L446.5 675.0 L441.6 674.0 L438.7 679.9 M529.0 636.2 L530.0 636.2 M529.0 654.3 L530.0 654.3 M529.0 656.5 L530.0 656.3 M529.0 661.5 L530.0 661.2 M523.1 673.5 L530.0 670.0 M525.1 675.0 L530.0 678.9 M525.1 682.8 L530.0 685.3 M411.0 630.8 L409.3 632.8 L408.8 630.8 L400.4 634.2 M529.0 630.8 L530.0 631.8 M547.7 620.0 L530.0 639.6 M547.7 620.0 L546.2 628.8 L547.7 632.8 L547.7 645.5 L554.5 647.5 L567.3 648.5 L568.8 651.4 L564.3 655.3 L560.4 661.2 L554.5 664.2 L547.7 666.1 L532.0 671.0 M530.0 636.7 L547.7 636.7 M530.0 642.6 L547.7 642.6 M559.4 662.2 L561.4 669.1 L559.4 678.9 L549.6 679.9 M559.4 679.4 L573.2 686.7 L590.8 689.2 L600.7 687.2 L610.5 689.7 L615.4 689.7 L622.2 695.6 L628.1 697.5 L636.0 698.0 L641.9 701.5 L644.8 704.2 M605.6 620.0 L607.0 631.8 L604.6 636.7 L607.5 643.6 L616.4 653.4 L617.8 657.3 L616.8 662.2 L620.3 664.2 L620.3 669.1 L621.8 673.0 L616.4 679.9 L614.9 684.8 L615.4 689.7 M607.0 631.8 L619.3 629.3 L621.3 623.9 L632.1 622.5 L633.0 625.9 L636.0 627.4 L636.5 620.0 M636.0 698.0 L637.0 688.7 L640.9 682.8 L652.7 676.9 L660.5 674.5 L664.9 669.1 L664.9 659.7 L678.7 659.3 L678.7 650.9 L685.5 650.9 L685.5 657.8 L690.0 656.8 M530.0 654.8 L535.9 653.9 L542.3 655.3 L539.8 657.8 L530.0 659.3 M530.0 663.2 L532.0 669.1 L536.9 666.1 L546.7 664.2 L547.7 666.1 M532.0 671.0 L534.9 675.0 L542.8 673.0 L545.2 670.0 L545.7 675.0 L549.6 679.9 L559.4 676.4 M542.8 673.0 L541.8 680.8 L534.9 675.0 M530.0 675.9 L542.8 686.7 L549.6 681.8 L553.6 689.7 L542.8 695.6 L545.2 702.6 M530.0 684.8 L541.8 682.8 L549.6 681.8 M530.0 686.7 L539.8 694.6 L542.8 695.6 M542.8 686.7 L544.7 689.7 L550.6 687.7 L547.7 683.8 M548.2 620.0 L556.5 624.4 L564.3 620.5 L576.1 620.0 M426.6 608.4 L431.4 603.3 L433.6 604.7 L428.8 610.3 L426.6 608.4 M433.6 604.7 L435.0 601.8 L435.8 599.9 L442.4 598.8 L444.2 597.4 L452.0 605.8 L450.5 610.3 L435.4 602.2 M447.9 599.2 L453.4 593.3 L460.8 590.7 L466.7 590.0 M452.0 605.8 L461.5 611.4 L463.8 614.3 L465.6 622.4 L461.5 625.7 L451.2 619.5 L440.9 609.3 L435.4 610.6 L434.3 613.6 L428.8 610.3 M434.3 613.6 L436.5 615.8 L438.0 618.4 L440.9 618.4 L439.5 620.9 L441.3 623.5 L446.8 624.2 L450.1 622.8 L461.5 632.3 L464.5 629.4 M461.5 632.3 L463.0 634.2 L444.6 651.9 L440.2 665.0 M464.5 629.4 L482.9 637.9 L493.2 643.0 L499.1 648.9 L508.7 655.9 L511.6 659.6 M463.0 633.1 L480.0 641.2 L491.7 651.1 L489.5 653.3 L501.3 662.5 M482.9 637.9 L480.0 641.2 L475.5 648.9 L472.6 665.0 M491.7 651.1 L499.1 648.9 L502.0 643.0 L501.3 637.9 M493.2 643.0 L495.4 640.8 L499.1 637.9 M470.0 622.4 L470.0 631.2 M472.6 625.7 L476.6 631.2 L482.9 637.9 M476.6 631.2 L473.3 634.2 M465.6 622.4 L473.3 622.4 L476.3 621.7 L479.6 612.1 L463.0 611.4 M479.6 612.1 L491.7 616.9 L488.1 620.2 L481.4 625.3 L472.6 625.7 M476.3 621.7 L476.6 624.2 M488.1 619.5 L530.0 619.5 M483.6 637.1 L498.4 636.2 L513.1 636.8 L530.0 636.4 M499.5 590.0 L499.5 619.5 M512.7 601.0 L512.7 636.4 M526.3 602.5 L526.3 619.5 L527.1 629.8 L530.0 633.4 M486.6 602.5 L526.3 602.5 M499.5 607.7 L526.3 607.7 M505.7 590.0 L512.7 601.0 L519.7 601.8 L520.5 593.7 L523.4 593.7 L523.8 601.8 M472.6 625.7 L485.8 630.1 L488.1 628.3 L494.7 627.6 L497.6 631.2 L502.0 628.3 L507.9 626.1 L512.7 625.3 M497.6 631.2 L496.9 636.4 M475.5 597.4 L473.3 603.3 L472.6 605.5 L476.3 606.2 L486.6 604.7 L487.3 602.5 L484.4 601.0 L486.6 594.4 L485.8 590.0 M478.5 598.1 L479.2 602.5 L483.6 601.0 M491.0 590.0 L491.7 595.2 L499.5 596.6 M410.0 594.1 L421.4 595.9 L424.7 592.2 L429.1 591.8 L432.8 595.2 L429.9 598.5 L425.1 600.7 L423.3 604.0 L426.6 605.8 L429.5 602.2 L426.9 599.9 M410.0 620.9 L412.2 619.5 L415.9 615.0 L422.9 613.6 L425.8 615.8 L429.5 619.8 L432.8 617.6 L431.0 615.4 L434.3 613.6 M410.0 632.7 L412.9 628.3 L411.5 624.6 L412.9 620.9 M509.4 637.9 L509.8 654.1 L526.3 654.8 L530.0 653.3 M502.0 637.9 L502.8 641.5 L508.7 646.7 L509.8 647.4 M511.6 644.9 L516.0 642.3 L520.5 646.0 L521.2 648.2 L526.3 648.2 L527.1 641.5 L530.0 640.8 M510.1 646.0 L514.6 648.2 L515.3 652.6 M352.3 506.0 L352.3 510.8 L367.1 510.8 M357.1 488.0 L357.1 492.8 M361.5 488.0 L361.5 491.7 M338.0 514.5 L342.4 516.7 L349.8 516.7 M343.5 508.6 L346.1 508.2 M328.4 532.9 L332.1 535.0 M335.0 529.2 L336.5 535.0 M339.5 532.9 L344.6 535.0 M344.6 526.3 L341.7 535.0 M354.2 533.6 L357.1 535.0 M325.8 522.6 L326.9 526.3 L332.1 526.3 L333.6 530.7 M316.6 527.4 L323.3 524.8 M385.1 511.5 L396.9 507.1 M388.1 505.7 L392.5 516.0 M393.9 504.2 L398.4 513.0 M405.7 516.0 L420.5 507.9 L430.0 503.4 M409.4 502.0 L420.5 514.5 M416.8 508.6 L424.9 504.2 M411.6 521.1 L416.8 511.5 M420.5 514.5 L427.8 511.5 M402.0 520.4 L405.7 516.0 M391.0 470.3 L391.0 478.4 M400.6 476.9 L402.0 480.6 L407.9 482.1 M388.8 478.4 L400.6 480.6 M381.1 478.4 L384.4 483.6 M373.7 469.6 L379.6 469.6 M361.5 501.2 L360.8 504.2 L367.4 505.7 M372.6 503.4 L374.8 500.1 M411.6 492.4 L411.6 493.9 M403.5 490.2 L401.3 497.6 M383.6 489.5 L381.8 498.3 M391.0 490.9 L390.3 496.8 M377.7 515.2 L383.6 514.5 M382.2 521.1 L387.3 518.2 M383.6 522.6 L391.0 521.1 M361.5 525.5 L364.5 523.3 M363.0 519.6 L364.5 523.3 M346.8 518.2 L349.8 516.7 L350.5 515.2 M523.8 596.3 L530.8 596.2 M437.6 589.3 L439.5 593.2 L445.4 592.2 L449.4 589.3 L453.4 593.3 M451.5 476.9 L451.5 485.0 L454.9 486.5 L455.2 492.4 M443.1 484.7 L446.0 484.7 L446.0 489.5 L443.1 489.5 M470.7 507.1 L473.6 507.1 L473.6 510.8 L477.3 510.8 L478.1 513.0 L483.9 513.0 M470.7 500.9 L470.7 507.1 M432.4 469.6 L429.5 475.5 L424.3 484.3 L422.1 490.9 M436.8 469.9 L437.6 474.7 L432.4 484.3 L428.0 492.4 M437.6 474.7 L443.1 473.6 M468.9 469.9 L469.6 473.6 L472.2 474.0 M451.5 474.4 L466.3 474.0 L469.6 473.6 M429.5 475.5 L439.8 478.4 L441.2 476.9 M428.0 481.4 L433.9 478.4 L436.8 480.3 M432.4 484.3 L436.8 481.4 L438.3 485.0 M430.9 489.5 L436.8 485.0 L437.2 491.7 L442.7 492.4 M443.1 494.6 L457.4 493.5 L461.9 493.9 L477.3 499.0 L484.7 499.8 L520.0 501.2 M442.7 498.3 L445.7 496.8 L451.5 495.3 L458.2 496.1 L466.3 499.8 L477.3 500.1 M442.7 498.3 L447.1 504.9 L449.3 504.2 L448.6 496.8 M451.5 495.3 L450.8 503.4 L456.7 507.1 L458.9 510.1 M458.2 496.1 L458.9 501.2 L463.3 507.1 L464.8 510.1 M466.3 499.8 L467.0 507.1 M447.1 504.9 L456.0 507.9 L464.8 508.6 L470.7 507.1 M429.5 510.8 L442.7 510.8 L444.2 510.4 L461.1 510.8 M429.1 516.0 L442.3 516.0 L442.7 510.8 M444.2 510.4 L448.6 510.8 L449.0 516.7 L456.0 516.7 L456.0 513.8 M432.4 517.4 L436.1 521.9 L442.7 522.6 L442.7 524.8 L448.6 525.5 L449.0 516.7 M429.1 522.6 L430.9 524.8 L442.0 524.8 M449.0 525.5 L456.0 525.5 L457.1 530.0 M445.7 526.3 L446.0 535.0 M430.9 532.2 L445.7 533.6 M464.8 529.2 L464.8 535.0 M484.3 485.8 L484.3 532.2 M487.3 498.3 L487.3 520.4 M490.9 501.2 L490.9 530.0 M493.9 501.2 L493.9 516.0 M497.2 499.8 L497.2 530.7 M503.8 501.2 L503.8 507.1 M511.2 502.0 L511.2 517.4 M477.7 488.4 L484.3 488.4 M477.7 493.1 L490.6 493.1 M477.7 496.1 L494.3 496.8 M484.3 504.2 L497.2 504.9 M484.3 507.1 L494.3 507.1 M484.3 510.8 L511.2 510.8 M484.3 516.0 L497.2 516.0 M484.3 520.4 L491.3 520.4 M497.2 507.1 L503.8 507.1 M484.3 530.7 L497.2 530.0 M484.3 489.5 L488.7 485.8 L489.1 490.9 L491.3 494.6 L495.0 496.8 L497.2 496.1 L503.1 495.7 L503.8 498.3 L509.7 498.3 L510.5 494.6 L517.8 493.1 L519.7 487.2 L520.0 485.0 M497.9 476.6 L501.6 480.3 L510.5 482.1 L520.0 485.0 M514.9 475.8 L520.0 479.9 M497.2 521.1 L510.5 517.4 L513.4 525.5 L499.4 531.4 L497.2 526.3 M511.2 510.8 L517.8 513.0 L520.0 511.5 M313.3 521.3 L321.0 523.3 L323.8 525.7 L324.3 529.3 L326.0 531.0 L326.5 532.9 L330.4 532.6 L331.5 534.3 L334.8 533.2 L338.1 532.6 L340.8 535.9 L343.0 539.2 L342.5 541.4 L344.1 542.0 L345.2 539.8 L348.0 543.6 L350.2 545.8 L353.5 546.9 L359.5 551.3 L362.8 550.8 L367.8 547.5 L368.9 545.8 L367.8 542.5 L369.4 539.2 L368.3 537.0 M323.8 525.7 L329.3 526.6 L334.2 528.8 L336.4 527.1 L340.8 531.5 L343.0 528.2 L345.2 526.0 L349.6 525.5 M334.2 528.8 L331.5 533.7 M329.3 526.6 L329.3 531.5 M340.8 531.5 L345.2 527.1 L348.5 527.7 L345.2 533.2 L340.8 531.5 M341.9 532.6 L346.3 527.7 M349.6 525.5 L349.6 533.2 L355.7 533.7 L355.7 529.3 L350.2 529.3 M350.2 531.0 L355.1 531.5 M345.2 533.2 L345.8 538.7 L349.6 539.2 L350.2 533.7 M340.8 533.2 L345.2 533.7 M339.7 535.9 L344.1 538.1 M350.2 533.7 L351.3 537.0 L354.0 540.9 L353.5 545.8 M355.7 533.7 L356.8 537.0 L355.7 542.5 L357.3 541.4 L357.9 537.0 L368.3 541.4 M356.8 537.0 L359.5 534.3 M357.9 537.0 L358.4 535.9 L367.8 538.7 M356.2 529.9 L358.4 529.3 L360.6 533.7 L356.2 533.2 M369.4 546.4 L376.0 548.0 L381.0 546.9 M629.9 507.5 L636.2 507.5 L636.7 514.9 L629.9 513.9 L629.4 510.4 M595.5 475.6 L595.0 480.5 L589.6 486.4 L594.5 487.9 L594.5 498.2 M608.3 475.6 L611.2 479.5 L609.3 487.4 L608.3 498.2 M579.3 498.2 L616.1 498.2 L616.1 504.6 M587.7 498.7 L587.7 504.1 L594.0 504.1 L594.0 498.7 M585.7 505.0 L594.0 505.0 L594.0 508.5 L585.7 508.5 L585.7 505.0 M595.0 498.7 L595.0 506.0 L601.4 506.0 L601.4 498.7 M601.4 506.0 L601.4 512.4 L590.1 512.4 M601.4 506.0 L615.6 507.0 M589.6 508.5 L585.7 515.8 L582.8 527.6 L577.4 530.6 L576.9 534.5 M570.0 531.1 L577.9 538.4 M577.9 535.0 L601.4 545.3 L607.3 549.2 L615.1 550.2 L621.0 553.1 M591.1 555.0 L591.1 548.2 L602.4 555.0 M622.0 554.1 L629.4 553.1 L629.9 555.0 M691.7 510.4 L699.5 510.0 L701.0 508.5 L704.4 510.4 L710.3 511.9 L705.4 520.8 L705.4 533.5 L712.3 533.5 L712.3 527.6 L726.5 527.6 L726.5 533.5 L730.0 533.5 M710.3 511.9 L713.3 511.4 L723.1 516.3 L730.0 517.8 M725.1 516.3 L730.0 515.8 M646.5 534.5 L654.4 540.4 L660.3 543.3 L664.2 549.2 L665.2 555.0 M599.4 545.0 L607.3 549.4 L617.1 549.9 L621.0 553.3 M591.6 554.8 L591.6 548.4 L601.4 553.3 L604.3 556.8 L606.3 562.7 M587.7 564.6 L596.5 564.6 L596.5 579.8 M636.7 555.8 L643.6 556.3 L643.6 601.4 L637.2 601.9 L636.7 626.5 L634.8 627.4 L632.8 623.5 L629.9 622.5 L622.0 623.5 L620.0 628.4 L607.3 631.8 L604.3 636.3 L605.3 640.2 L608.8 645.0 M577.9 564.6 L578.3 590.1 L592.1 595.0 M570.0 585.2 L584.7 580.3 L588.6 579.8 M584.7 580.3 L585.7 589.2 L592.1 590.1 M581.8 570.5 L584.7 570.5 L584.7 577.4 L581.8 577.4 L581.8 570.5 M612.2 574.4 L612.7 584.3 L611.2 586.2 L592.1 587.2 L592.6 607.8 L600.4 607.8 L603.4 613.7 L606.3 626.5 L607.3 631.8 M593.6 581.3 L612.2 580.8 M593.6 581.8 L593.6 586.2 M598.5 581.3 L598.5 586.2 M602.4 580.8 L602.4 586.2 M607.3 580.8 L607.8 586.2 M597.5 576.4 L597.5 580.3 M602.4 576.4 L602.4 580.3 M609.3 575.4 L609.7 580.3 M573.9 604.9 L578.8 603.9 L575.9 605.8 L578.3 611.7 L577.4 615.7 L578.8 616.1 L575.9 619.6 L570.0 621.1 M606.3 562.7 L615.1 571.5 L622.0 578.4 M609.3 563.6 L619.1 571.5 L623.0 575.4 L632.8 578.9 L643.6 580.8 L653.4 581.8 L658.3 586.2 L668.1 591.1 L677.0 593.6 L671.6 596.0 L676.0 597.5 L689.7 595.0 L696.6 600.0 L703.5 603.9 L711.8 609.3 L715.2 614.7 L721.6 621.1 L730.0 611.7 M613.2 579.3 L622.0 578.4 L623.0 582.3 L628.9 588.2 L636.7 594.1 L642.6 601.4 M617.1 571.5 L619.6 571.5 L620.0 574.4 M661.3 545.0 L664.2 549.9 L665.2 553.8 L670.1 557.8 L674.0 556.3 L682.9 557.8 L678.9 562.2 L680.9 564.1 L684.8 566.1 L683.8 568.6 L685.8 576.4 L691.7 575.4 L694.1 577.4 L690.7 582.3 L692.2 584.3 L689.7 588.2 L692.7 591.1 L691.7 593.6 L689.7 595.0 M742.3 464.4 L748.6 473.2 L739.8 506.1 L735.9 515.9 M795.6 464.4 L795.3 487.0 M754.5 479.1 L772.2 477.7 L782.0 483.6 L795.3 487.0 L801.1 488.5 L800.2 492.4 L795.8 497.8 L790.8 492.4 L788.9 494.3 L787.4 497.8 L779.1 498.8 L779.1 500.2 L781.0 501.7 L781.0 507.1 L760.9 507.1 L760.9 492.4 L761.4 483.6 L754.5 479.1 M772.2 477.7 L768.3 482.6 L767.8 492.4 M760.9 492.4 L778.1 492.9 L783.0 491.9 L782.5 489.4 L772.2 489.4 L769.3 491.9 M778.1 492.9 L778.6 498.8 L767.3 498.8 L767.3 507.1 M783.0 491.9 L787.9 495.3 M795.3 497.8 L795.3 507.1 L781.0 507.1 M801.1 488.5 L818.3 499.3 L824.7 501.7 L850.7 512.0 L867.4 518.9 L870.8 521.3 L857.1 526.7 M867.4 517.4 L870.8 521.3 M824.7 501.7 L823.2 505.1 L818.3 504.7 L815.4 508.6 L808.5 508.1 L802.6 507.6 L802.6 513.0 L800.7 515.9 L788.9 516.4 L788.9 521.8 L778.1 521.3 L777.1 526.2 M808.5 508.1 L808.5 513.0 M802.6 513.0 L815.4 513.0 L816.4 515.0 L829.6 515.4 L830.1 521.3 L839.4 521.3 L840.9 519.4 L857.1 526.7 M857.1 526.7 L855.1 534.6 L853.7 538.5 L855.1 542.4 L847.3 549.3 L856.6 554.2 L864.4 558.6 M857.1 526.7 L880.1 538.5 L890.0 546.4 L894.7 550.0 M730.0 516.4 L735.9 516.9 L756.5 516.4 L777.1 526.7 L787.9 533.6 L808.5 533.1 L809.5 538.5 L822.2 538.5 L822.7 545.4 L829.1 544.4 L830.1 551.3 L833.0 552.2 L832.1 554.7 L829.1 554.2 M730.0 517.9 L751.6 530.2 L759.4 537.5 L759.4 550.3 M751.6 530.2 L764.3 528.7 L769.3 530.7 L774.2 534.6 L774.2 538.5 L767.8 538.5 M730.0 533.6 L753.6 533.1 L753.6 538.5 L757.5 539.5 L757.5 550.3 L781.0 550.3 M733.4 533.6 L733.4 560.0 M760.9 533.6 L760.9 560.0 M767.3 528.7 L767.3 560.0 M774.2 544.4 L774.2 560.0 M781.0 533.6 L781.0 538.5 M781.0 550.3 L781.0 556.2 M788.9 550.3 L788.9 560.0 M794.8 533.6 L794.8 560.0 M802.1 544.9 L802.1 550.3 M760.9 533.6 L781.0 533.6 M760.9 538.5 L774.2 538.5 M760.9 544.4 L774.2 544.4 M760.9 553.2 L767.3 553.2 M760.9 556.2 L781.0 556.2 M781.0 538.5 L787.9 539.5 L788.9 542.4 L794.8 542.4 M787.9 539.5 L794.8 539.5 M781.0 550.3 L784.0 544.9 L802.1 544.9 M785.9 547.3 L802.1 547.3 M784.0 544.9 L786.9 550.3 L802.1 550.3 M809.5 538.5 L815.4 539.5 L816.4 550.3 L815.4 555.2 L808.5 555.7 L808.5 560.0 M816.4 550.3 L828.1 558.1 L831.1 560.0 M822.2 554.2 L822.7 560.0 M857.6 560.0 L857.6 556.7 L864.4 558.6 M733.4 550.0 L733.9 602.0 L732.0 603.0 L731.5 605.9 L730.0 606.9 M733.9 602.0 L773.7 602.5 L773.7 613.3 L781.0 613.8 L781.0 625.6 L787.9 625.6 L787.9 631.0 L794.3 631.0 L794.8 619.7 L801.1 619.2 L801.1 613.8 L794.8 613.8 L794.3 579.4 L787.9 579.4 L787.4 572.6 M759.4 602.0 L759.9 596.6 L766.8 595.6 L767.8 590.7 L773.2 590.2 L773.2 573.6 L767.3 573.1 L767.8 556.9 M760.4 550.0 L760.9 561.8 L767.3 561.8 M760.9 556.4 L781.0 556.4 M774.7 550.0 L774.7 561.3 L781.5 561.8 L781.5 567.2 L787.9 567.2 M781.0 550.0 L781.0 556.4 M788.9 550.0 L788.9 556.9 M794.8 550.0 L794.8 556.9 M795.8 556.9 L795.8 567.2 M788.9 561.8 L802.6 561.8 M802.6 561.8 L816.4 561.8 L822.2 561.3 L822.2 579.4 M802.6 567.2 L804.6 570.6 L808.5 575.5 L818.3 579.4 L836.0 583.4 L857.6 588.8 M808.5 561.3 L809.0 556.4 L815.4 555.9 L816.4 550.0 M815.4 561.8 L814.4 573.1 L807.5 573.1 M816.4 550.0 L840.9 566.7 L849.7 571.1 L856.6 572.6 L873.3 579.4 L883.1 583.9 M829.1 550.0 L829.6 554.4 L833.0 553.9 L832.1 551.5 M847.3 550.0 L864.4 558.3 L863.5 567.7 L862.5 572.6 M857.6 555.9 L857.1 589.3 M822.2 567.7 L841.9 567.7 L842.4 573.6 M822.2 573.6 L883.1 573.6 M842.9 567.7 L842.9 578.5 L856.6 578.9 M856.6 579.4 L870.3 579.9 L870.3 602.0 M864.0 567.7 L876.7 567.7 L876.7 573.6 M828.1 573.6 L828.1 580.4 M835.5 573.6 L835.5 591.2 M794.8 588.3 L802.6 585.3 L809.5 580.9 L811.5 582.9 L816.4 583.9 L818.3 589.3 L819.3 594.2 L815.4 605.0 L814.4 607.9 L819.3 611.8 L818.3 618.7 L816.4 625.6 L813.4 627.5 L809.5 636.4 L808.5 640.3 L804.6 642.2 L798.7 641.8 L784.0 645.7 L774.2 648.1 L772.2 647.2 L771.2 636.8 L750.6 636.8 L750.6 650.0 M817.8 612.8 L815.4 617.7 L819.3 616.7 L817.8 612.8 M787.9 625.6 L808.0 625.6 L808.5 636.4 M818.3 619.2 L849.2 619.7 L849.7 631.0 L870.3 631.0 L870.3 636.4 L864.0 636.8 L864.0 642.2 L877.2 642.2 L877.2 650.0 M819.3 579.4 L818.3 589.3 M821.3 585.3 L835.5 584.8 M821.3 587.8 L835.5 587.8 M821.3 590.2 L835.5 591.2 L857.6 588.8 M819.3 594.2 L828.1 593.2 L827.2 599.1 L825.2 601.0 L818.3 600.0 M821.3 596.1 L828.1 595.6 M821.3 585.3 L821.3 590.2 M849.2 579.4 L849.7 581.4 L842.9 585.3 L857.6 588.8 M857.6 588.8 L860.5 592.2 L870.3 593.2 M859.5 592.2 L860.5 606.9 L870.3 607.4 M851.7 601.0 L858.6 598.6 L859.5 605.9 L851.7 606.9 L850.2 611.8 L851.7 615.8 L855.6 614.3 L856.1 608.9 L851.7 608.9 M870.3 607.4 L870.8 612.8 L890.0 612.8 M883.1 612.8 L884.1 631.0 M867.4 610.4 L866.4 613.8 L868.4 618.7 L866.9 622.6 L870.3 625.6 L876.2 631.0 L890.0 631.0 M870.3 587.3 L878.2 587.3 L878.2 602.0 M870.3 593.2 L878.2 593.2 M878.2 590.2 L883.1 590.7 L883.1 597.1 M876.7 573.6 L877.2 579.4 L880.1 587.3 L880.1 590.2 M881.1 581.4 L881.6 589.3 M737.4 649.1 L741.8 647.6 L746.7 650.0 M897.7 578.5 L897.7 602.0 M890.8 581.4 L897.7 586.3 M884.4 585.3 L894.7 589.3 M901.6 587.3 L904.5 587.8 L905.0 590.2 L911.4 590.7 M890.8 597.1 L890.8 602.0 M880.0 597.1 L883.9 597.1 M894.7 550.0 L903.6 556.9 L911.4 576.5 L911.4 585.3 M917.3 592.2 L935.0 608.9 L935.9 612.8 L941.8 619.7 L946.7 621.1 L950.7 627.5 L953.1 630.5 L964.4 641.3 L965.9 636.4 L973.2 636.4 L973.7 642.2 L980.1 642.2 L980.1 648.1 L978.1 648.6 M880.0 631.0 L953.1 630.5 M883.9 613.8 L883.9 631.0 M880.0 613.8 L915.3 613.6 L912.4 608.9 L906.5 608.4 M897.7 602.5 L897.7 613.6 M898.2 604.5 L903.6 604.5 L908.5 603.5 L911.4 603.0 L916.8 606.9 L906.5 608.4 M904.5 609.4 L904.5 613.6 M927.1 631.0 L929.1 640.3 L935.0 650.0 M906.5 607.5 L905.9 608.9 L904.5 609.5 L903.1 608.9 L902.5 607.5 L903.1 606.1 L904.5 605.5 L905.9 606.1 L906.5 607.5 M965.4 640.6 L965.4 636.7 L973.3 636.7 L973.3 642.5 L980.1 642.5 L979.1 648.4 L990.9 649.4 L1002.6 654.3 L1012.4 664.1 L1032.0 667.0 L1041.8 666.4 L1053.5 670.9 L1068.2 671.3 L1069.2 678.7 L1077.0 688.5 L1088.8 693.4 L1103.4 704.2 M934.9 650.0 L940.0 662.1 L948.8 666.0 L949.8 675.8 L952.7 676.8 L949.8 682.7 L958.6 690.5 L959.6 687.5 L965.4 687.5 L965.4 693.4 L960.6 693.4 L961.5 698.3 L965.4 699.3 L965.4 704.2 M940.0 630.8 L952.7 630.8 M729.6 610.2 L732.5 602.4 L733.5 575.0 M635.7 626.9 L627.8 623.0 L620.0 625.9 M877.6 642.7 L878.4 650.4 L891.1 650.4 L892.1 665.0 L921.4 665.6 L925.3 676.8 L932.2 677.8 L932.2 704.2 M751.1 650.4 L741.4 648.4 L733.5 652.3 L725.7 650.4 L702.2 653.3 L685.6 658.2 L685.6 650.4 L678.7 650.4 L678.7 659.2 L665.0 659.6 L664.0 670.9 L655.2 676.8 L641.5 682.7 L636.6 688.5 L636.6 697.3 L645.4 704.2 M620.0 669.0 L622.0 671.9 L620.0 676.8 M1519.5 604.4 L1519.5 608.3 L1470.6 663.1 L1464.7 701.2 M1527.4 600.4 L1528.0 623.0 M1528.3 640.6 L1529.9 680.7 M1394.3 648.8 L1414.8 649.0 L1415.2 653.3 L1409.0 653.7 L1405.0 657.2 L1404.1 654.9 L1397.2 654.3 L1394.3 648.8 M1590.0 446.3 C1585.8 450.6 1568.6 465.5 1564.6 472.3 C1560.5 479.1 1567.0 482.6 1565.5 487.0 C1564.1 491.4 1557.8 495.8 1555.8 498.7 C1553.7 501.7 1553.2 503.1 1553.4 504.6 C1553.6 506.1 1555.5 505.2 1556.7 507.5 C1557.9 509.8 1560.5 513.9 1560.6 518.3 C1560.8 522.7 1558.6 529.7 1557.7 534.0 C1556.8 538.2 1555.4 540.8 1555.4 543.7 C1555.4 546.7 1556.8 546.7 1557.7 551.6 C1558.6 556.5 1559.0 569.3 1560.6 573.1 C1562.3 576.9 1566.4 573.9 1567.5 574.1 M1565.5 582.8 C1563.4 584.3 1557.4 589.5 1552.8 591.6 C1548.2 593.8 1542.4 594.1 1538.1 595.6 C1533.9 597.0 1530.5 599.0 1527.4 600.4 C1524.3 601.9 1520.8 603.7 1519.5 604.4"/><path d="M1529.3 630.2 L1542.1 630.2 L1542.1 632.0 L1529.3 632.0 Z" fill="#ffff00" stroke="#232323" stroke-width="0.5"/><g fill="#8d5a99" stroke="#2e2230" stroke-width="1.1"><circle cx="357.1" cy="521.9" r="3.4"/><circle cx="364.5" cy="530.7" r="3.4"/><circle cx="399.8" cy="509.3" r="3.4"/><circle cx="426.7" cy="496.5" r="3.4"/><circle cx="477.9" cy="507.6" r="3.4"/><circle cx="491.1" cy="555.7" r="3.4"/><circle cx="516.7" cy="664.7" r="3.4"/><circle cx="444.2" cy="479.7" r="3.4"/><circle cx="450.8" cy="483.7" r="3.4"/><circle cx="623.8" cy="507.2" r="3.4"/><circle cx="591.1" cy="558.7" r="3.4"/><circle cx="592.1" cy="573.7" r="3.4"/><circle cx="792.8" cy="563.2" r="3.4"/><circle cx="897.7" cy="588.8" r="3.4"/><circle cx="888.8" cy="595.6" r="3.4"/><circle cx="1525.0" cy="631.8" r="3.4"/></g></svg>
<div style="position:absolute;left:1632px;top:570px;width:1px;height:1px;background:#b7b2ac"></div>
<div style="position:absolute;left:1632px;top:573px;width:1px;height:1px;background:#b7b2ac"></div>
<div style="position:absolute;left:1632px;top:576px;width:1px;height:1px;background:#b7b2ac"></div>
<div style="position:absolute;left:1632px;top:579px;width:1px;height:1px;background:#b7b2ac"></div>
<div style="position:absolute;left:1632px;top:582px;width:1px;height:1px;background:#b7b2ac"></div>
<div style="position:absolute;left:1632px;top:585px;width:1px;height:1px;background:#b7b2ac"></div>
</body></html>
